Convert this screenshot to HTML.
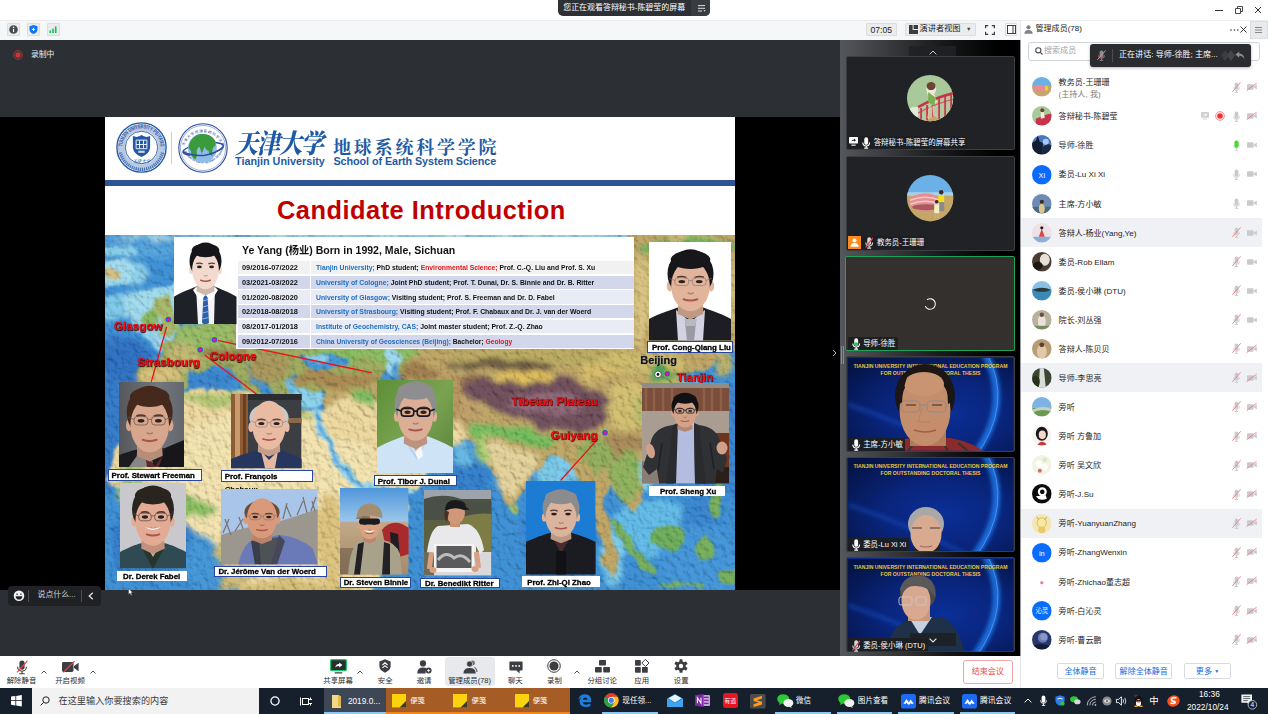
<!DOCTYPE html>
<html lang="zh">
<head>
<meta charset="utf-8">
<title>腾讯会议</title>
<style>
*{box-sizing:border-box;margin:0;padding:0}
html,body{width:1268px;height:714px;overflow:hidden;background:#fff}
body{position:relative;font-family:"Liberation Sans","Noto Sans CJK SC",sans-serif;font-size:9px;color:#222;-webkit-font-smoothing:antialiased}
.abs{position:absolute}
.t{position:absolute;white-space:nowrap;line-height:1}
svg{position:absolute;overflow:visible}
/* top */
#titlebar{left:0;top:0;width:1268px;height:20px;background:#fff}
#toolbar{left:0;top:20px;width:1268px;height:20px;background:#f6f7f8;border-top:1px solid #ececee}
#pill{left:558px;top:0;width:152px;height:15.7px;background:#2d3034;border-radius:0 0 5px 5px;color:#fff;font-size:8px}
.tb-btn{position:absolute;top:22px;height:15px;background:#ebecee;border:1px solid #dcdde0;border-radius:1px}
/* main stage */
#stage{left:0;top:40px;width:840px;height:616px;background:#2c2f33}
#blackL{left:0;top:117px;width:105px;height:473px;background:#000}
#blackR{left:735px;top:117px;width:105px;height:473px;background:#000}
#slide{left:105px;top:117px;width:630px;height:473px;background:#fff;overflow:hidden}
/* video column */
#vcol{left:840px;top:40px;width:180px;height:616px;background:#1a1b1d}
.tile{position:absolute;left:847px;width:168px;height:94px;border-radius:2px;overflow:hidden}
.tile .lab{position:absolute;left:0;bottom:0;height:11px;background:rgba(25,27,30,.85);color:#fff;font-size:8px;line-height:11px;padding:0 4px 0 20px;white-space:nowrap;border-radius:0 2px 0 0}
/* members panel */
#panel{left:1020px;top:40px;width:248px;height:616px;background:#fff}
.row{position:absolute;left:1022px;width:246px;height:29px}
.row.hl{background:#f0f1f5}
.row .nm{position:absolute;left:37px;top:9px;font-size:8.5px;line-height:10px;color:#1a1a1a;white-space:nowrap}
.av{position:absolute;left:10px;top:5px;width:19px;height:19px;border-radius:50%;overflow:hidden}
/* bottom */
#bbar{left:0;top:656px;width:1268px;height:32px;background:#fff}
#task{left:0;top:687.6px;width:1268px;height:26.4px;background:#161f2c}
</style>
</head>
<body>
<!-- ======= top bars ======= -->
<div id="titlebar" class="abs"></div>
<div id="toolbar" class="abs"></div>
<div id="pill" class="abs"><span class="t" id="pilltxt" style="left:5.2px;top:4.2px;font-size:7.96px">您正在观看答辩秘书-陈碧莹的屏幕</span><div class="abs" style="left:133.3px;top:0;width:18.7px;height:15.7px;background:#393c40;border-radius:0 0 5px 0"></div><svg style="left:139.5px;top:4.5px" width="8" height="7" viewBox="0 0 8 7" fill="none" stroke="#f2f2f2" stroke-width=".9"><path d="M0,.6h7M0,3.3h7M0,6h4"/><path d="M5.4,5.2 L6.6,6.6 L7.8,5.2Z" fill="#f2f2f2" stroke="none"/></svg></div>
<!--TOPBARX-->
<!-- window controls -->
<svg style="left:1214px;top:4px" width="50" height="12" viewBox="0 0 50 12" fill="none" stroke="#333" stroke-width="1"><path d="M1,6.5h8"/><path d="M21.5,4.5h5v5h-5z M23.5,4.5v-2h5v5h-2" stroke-width=".9"/><path d="M41,3l6,6M47,3l-6,6"/></svg>
<!-- left toolbar icons -->
<div class="tb-btn" style="left:7px;width:13px;height:13px;top:23px"></div>
<div class="tb-btn" style="left:27px;width:13px;height:13px;top:23px"></div>
<div class="tb-btn" style="left:47px;width:13px;height:13px;top:23px"></div>
<svg style="left:7px;top:23px" width="54" height="13" viewBox="0 0 54 13"><circle cx="6.5" cy="6.5" r="4.3" fill="#4a4d52"/><rect x="6" y="5.8" width="1.1" height="3.2" fill="#fff"/><circle cx="6.55" cy="4.3" r=".7" fill="#fff"/>
<path d="M26.5,2 L30.5,3.3 V6.8 Q30.3,9.6 26.5,11 Q22.7,9.6 22.5,6.8 V3.3Z" fill="#1473f0"/><path d="M26.5,4.8v3.2M24.9,6.4h3.2" stroke="#fff" stroke-width="1"/>
<rect x="42.5" y="7.4" width="1.6" height="2.6" fill="#13c05c"/><rect x="45.2" y="5.6" width="1.6" height="4.4" fill="#13c05c"/><rect x="47.9" y="3.4" width="1.6" height="6.6" fill="#13c05c"/></svg>
<!-- timer & view -->
<div class="tb-btn" style="left:866px;width:31px;top:23px;height:13px"></div>
<div class="t" style="left:870.5px;top:25.5px;font-size:8.6px;color:#222">07:05</div>
<div class="tb-btn" style="left:904.5px;width:71px;top:23px;height:13px"></div>
<svg style="left:909px;top:25px" width="9" height="9" viewBox="0 0 9 9"><path d="M0,0h3.6v5h5.4v4h-9z" fill="#3a3d42"/><rect x="4.6" y="0" width="4.4" height="4" fill="#3a3d42"/></svg>
<div class="t" style="left:919.5px;top:25.3px;font-size:8.2px;color:#222" id="spk">演讲者视图</div>
<div class="t" style="left:966px;top:27px;font-size:5.5px;color:#444">▼</div>
<svg style="left:985px;top:24.5px" width="10" height="10" viewBox="0 0 10 10" fill="none" stroke="#3a3d42" stroke-width="1.2"><path d="M.6,3.2V.6h2.6M6.8,.6h2.6v2.6M9.4,6.8v2.6H6.8M3.2,9.4H.6V6.8"/></svg>
<div class="tb-btn" style="left:1004.5px;width:12.5px;top:23px;height:13px;background:#fff"></div>
<svg style="left:1006.5px;top:25px" width="9" height="9" viewBox="0 0 9 9" fill="none" stroke="#3a3d42" stroke-width="1"><rect x=".5" y=".5" width="8" height="8"/><path d="M6,.5v8"/></svg>
<!-- panel header -->
<div class="abs" style="left:1020px;top:21px;width:248px;height:19px;background:#fff;border-left:1px solid #e4e5e8"></div>
<svg style="left:1024px;top:24.5px" width="9" height="9" viewBox="0 0 9 9" fill="#808388"><circle cx="4.5" cy="2.3" r="2.1"/><path d="M.3,8.8 Q.5,5 4.5,5 Q8.5,5 8.7,8.8Z"/></svg>
<div class="t" style="left:1035.5px;top:25.2px;font-size:8.05px;color:#222" id="mgr">管理成员(78)</div>
<svg style="left:1229.5px;top:28.5px" width="9" height="2" viewBox="0 0 9 2" fill="#333"><circle cx="1" cy="1" r=".8"/><circle cx="4.4" cy="1" r=".8"/><circle cx="7.8" cy="1" r=".8"/></svg>
<svg style="left:1240px;top:26px" width="7" height="7" viewBox="0 0 7 7" stroke="#333" stroke-width="1"><path d="M.5,.5l6,6M6.5,.5l-6,6"/></svg>
<div class="abs" style="left:1250px;top:21px;width:18px;height:18px;background:#e9eaec;border:1px solid #dcdde0"></div>
<svg style="left:1255px;top:27px" width="7" height="6" viewBox="0 0 7 6" stroke="#85888d" stroke-width="1"><path d="M0,.5h7M0,3h7M0,5.5h7"/></svg>
<!--/TOPBARX-->
<!--TOPBAR-->

<!-- ======= stage ======= -->
<div id="stage" class="abs"></div>
<div id="blackL" class="abs"></div>
<div id="blackR" class="abs"></div>
<div id="slide" class="abs">
<!-- header (coords relative to slide: x-105, y-117) -->
<svg style="left:10.5px;top:5px" width="51" height="51" viewBox="-25.5 -25.5 51 51">
  <defs><path id="lp1" d="M-19.2,0 A19.2,19.2 0 1 1 19.2,0"/><path id="lp1b" d="M-13.5,4 A14,14 0 0 0 13.5,4"/></defs>
  <circle r="24.6" fill="#fff" stroke="#2458a6" stroke-width="1.4"/>
  <circle r="22.9" fill="none" stroke="#2458a6" stroke-width=".5"/>
  <circle r="19.6" fill="none" stroke="#2458a6" stroke-width="5.6" opacity=".32"/>
  <circle r="16.2" fill="none" stroke="#2458a6" stroke-width=".9"/>
  <text font-family="Liberation Sans,sans-serif" font-weight="bold" font-size="5.6" fill="#2458a6" textLength="58" lengthAdjust="spacingAndGlyphs"><textPath href="#lp1" startOffset="1">TIANJIN UNIVERSITY·PEIYANG</textPath></text>
  <path d="M-8.6,-11.4 Q-4,-9.4 0,-12.4 Q4,-9.4 8.6,-11.4 L8.6,0.5 Q7.6,6.6 0,9.6 Q-7.6,6.6 -8.6,0.5 Z" fill="#2458a6"/>
  <path d="M-5.4,-7.4 H5.4 V1.2 H-5.4Z M-2,-7.4 V1.2 M2,-7.4 V1.2 M-5.4,-3 H5.4" fill="none" stroke="#e4ecf7" stroke-width="1"/>
  <rect x="-3.2" y="3.2" width="6.4" height="2.2" fill="#e4ecf7" opacity=".85"/>
  <text font-family="Liberation Serif,Noto Serif CJK SC,serif" font-weight="bold" font-size="4.4" fill="#2458a6" text-anchor="middle" x="0" y="15.4" font-style="italic">天津大学</text>
  <path d="M-21,5 A21.5,21.5 0 0 0 21,5" fill="none" stroke="#2458a6" stroke-width="3.2" stroke-dasharray="1.2 .9" opacity=".75"/>
</svg>
<div class="abs" style="left:66px;top:15px;width:1px;height:32px;background:#cfcfcf"></div>
<svg style="left:72.5px;top:6px" width="50" height="50" viewBox="-25 -25 50 50">
  <defs><path id="lp2" d="M-19.6,2 A19.7,19.7 0 0 1 19.6,2"/><path id="lp2b" d="M-21,-3 A21.2,21.2 0 0 0 21,-3"/></defs>
  <circle r="24.2" fill="#fff" stroke="#2b4f9e" stroke-width="1.1"/>
  <circle r="22.6" fill="none" stroke="#2b4f9e" stroke-width=".45"/>
  <text font-family="Liberation Sans,Noto Sans CJK SC,sans-serif" font-size="3.6" fill="#2b4f9e" textLength="50" lengthAdjust="spacing"><textPath href="#lp2" startOffset="4">天津大学地球系统科学学院</textPath></text>
  <text font-family="Liberation Sans,sans-serif" font-weight="bold" font-size="3.1" fill="#2b4f9e" textLength="50" lengthAdjust="spacing"><textPath href="#lp2b" startOffset="7">School of Earth System Science</textPath></text>
  <ellipse cx="0" cy="1" rx="20.4" ry="5.6" fill="none" stroke="#2b4f9e" stroke-width="1.5" transform="rotate(-9)"/>
  <circle r="14.4" cx="-0.6" cy="0.2" fill="#8fbce8"/>
  <path d="M-13.6,-4.5 Q-10,-13.4 -1.5,-14 Q8,-14.6 12.4,-7 Q13.6,-2 10,-0.5 Q8.6,3.4 9.4,8 Q6,7 5.4,2.6 Q3,2.8 1.6,-1.4 Q0.4,3.4 -1.6,5.6 Q-2.4,1 -3.6,-1.2 Q-6,0 -6.4,4 Q-5,9 -8,11.4 Q-12,8.4 -12,3 Q-15.4,0 -13.6,-4.5Z" fill="#3b9a3c"/>
  <path d="M-20,3.6 Q-10,8.6 2,7.2 Q14,5.4 20.2,-1.2" fill="none" stroke="#2b4f9e" stroke-width="1.5"/>
</svg>
<div class="t" style="left:130px;top:13.5px;font-family:'Liberation Serif','Noto Serif CJK SC',serif;font-weight:900;font-style:italic;font-size:23px;letter-spacing:-1px;color:#1e5aa6;transform-origin:0 0;transform:scaleY(1.16)" id="tju">天津大学</div>
<div class="t" style="left:130px;top:39px;font-weight:bold;font-size:10.8px;color:#1e5aa6;letter-spacing:0px" id="tjuen">Tianjin University</div>
<div class="t" style="left:228px;top:21.6px;font-family:'Liberation Serif','Noto Serif CJK SC',serif;font-weight:700;font-size:18px;letter-spacing:2.8px;color:#1e5aa6" id="sess">地球系统科学学院</div>
<div class="t" style="left:228.5px;top:39px;font-weight:bold;font-size:10.8px;color:#1e5aa6;letter-spacing:-0.08px" id="sessen">School of Earth System Science</div>
<div class="abs" style="left:0;top:63px;width:630px;height:5.5px;background:#2f5496"></div>
<div class="t" style="left:172px;top:80.8px;font-weight:bold;font-size:25.4px;letter-spacing:0.5px;color:#c00000" id="cand">Candidate Introduction</div>
<!--MAP-->
<svg style="left:0;top:118px" width="630" height="355" viewBox="0 0 630 355">
<defs>
<filter id="mb" x="-5%" y="-5%" width="110%" height="110%"><feTurbulence type="fractalNoise" baseFrequency="0.05" numOctaves="3" seed="7" result="n"/><feDisplacementMap in="SourceGraphic" in2="n" scale="14" xChannelSelector="R" yChannelSelector="G" result="d"/><feGaussianBlur in="d" stdDeviation="1.1"/></filter>
<filter id="mb2" x="-10%" y="-10%" width="120%" height="120%"><feTurbulence type="fractalNoise" baseFrequency="0.04" numOctaves="3" seed="21" result="n"/><feDisplacementMap in="SourceGraphic" in2="n" scale="18" xChannelSelector="G" yChannelSelector="R" result="d"/><feGaussianBlur in="d" stdDeviation="2.6"/></filter>
<filter id="relief" x="0" y="0" width="100%" height="100%"><feTurbulence type="fractalNoise" baseFrequency="0.16" numOctaves="5" seed="5" result="t"/><feDiffuseLighting in="t" lighting-color="#ffffff" surfaceScale="2.6" diffuseConstant="1.15"><feDistantLight azimuth="315" elevation="52"/></feDiffuseLighting></filter>
<clipPath id="mc"><rect width="630" height="355"/></clipPath>
</defs>
<g clip-path="url(#mc)">
<rect width="630" height="355" fill="#2784d2"/>
<g filter="url(#mb2)">
<ellipse cx="15" cy="37" rx="26" ry="13" fill="#7fcbe8" />
<ellipse cx="45" cy="70" rx="34" ry="16" fill="#8dd2ea" />
<ellipse cx="7" cy="73" rx="12" ry="10" fill="#6ec0e6" />
<ellipse cx="35" cy="15" rx="40" ry="8" fill="#3f9ada" />
<ellipse cx="20" cy="120" rx="28" ry="18" fill="#1c68c2" />
<ellipse cx="5" cy="195" rx="14" ry="60" fill="#1d6cc4" />
<ellipse cx="45" cy="305" rx="40" ry="40" fill="#1f70c6" />
<ellipse cx="100" cy="325" rx="22" ry="30" fill="#2f8ad4" />
<ellipse cx="105" cy="145" rx="26" ry="10" fill="#2378ca" />
<ellipse cx="210" cy="167" rx="36" ry="9" fill="#2a80ce" />
<ellipse cx="185" cy="153" rx="10" ry="12" fill="#5fb8e4" />
<ellipse cx="221" cy="125" rx="28" ry="8" fill="#2a82d0" />
<ellipse cx="297" cy="127" rx="12" ry="12" fill="#8fd4e8" />
<ellipse cx="320" cy="119" rx="8" ry="5" fill="#8fd4e8" />
<ellipse cx="360" cy="265" rx="26" ry="50" fill="#1f72c8" />
<ellipse cx="357" cy="217" rx="10" ry="14" fill="#52b0e2" />
<ellipse cx="455" cy="295" rx="36" ry="55" fill="#2378cc" />
<ellipse cx="455" cy="235" rx="28" ry="16" fill="#6cc4e8" />
<ellipse cx="535" cy="235" rx="18" ry="16" fill="#7accec" />
<ellipse cx="550" cy="293" rx="42" ry="30" fill="#4fb4e6" />
<ellipse cx="595" cy="285" rx="20" ry="26" fill="#2378cc" />
<ellipse cx="507" cy="325" rx="12" ry="26" fill="#6cc4ea" />
<ellipse cx="595" cy="325" rx="40" ry="36" fill="#2f8ad6" />
<ellipse cx="623" cy="205" rx="14" ry="60" fill="#2378cc" />
<ellipse cx="585" cy="145" rx="14" ry="5" fill="#8ad2ec" />
<ellipse cx="315" cy="2" rx="320" ry="4" fill="#a8dce6" />
</g>
<g filter="url(#mb)" opacity=".9">
<polygon points="23,59 45,53 71,49 73,65 71,105 55,117 45,105 31,99 25,79" fill="#98d9ee" />
<polygon points="0,27 23,23 31,37 19,49 0,51" fill="#9adaee" />
<polygon points="0,61 17,59 21,75 5,83 0,81" fill="#6fc4ea" />
<ellipse cx="20" cy="127" rx="24" ry="20" fill="#1560bc" />
<ellipse cx="13" cy="15" rx="20" ry="6" fill="#7fcdea" />
</g>
<g filter="url(#mb)">
<polygon points="47,63 65,60 69,77 71,98 53,101 57,85 47,77" fill="#9fb05a" />
<ellipse cx="45" cy="84" rx="7" ry="8" fill="#7db050" />
<ellipse cx="8" cy="37" rx="9" ry="5" fill="#cdb878" />
<polygon points="85,90 135,87 315,87 315,117 335,115 347,127 347,145 325,149 300,141 280,133 273,151 273,159 235,157 195,155 191,137 179,145 187,163 177,167 165,153 153,137 143,127 147,145 157,161 149,163 135,149 123,133 109,131 95,137 83,137 81,153 55,155 33,151 31,131 55,127 59,113 55,107 73,103" fill="#93a24e" />
<polygon points="45,173 81,157 135,153 157,165 195,177 225,175 247,167 273,159 335,149 365,157 373,179 357,201 341,217 327,235 315,249 295,259 303,275 291,305 275,335 265,360 137,360 128,330 118,305 101,285 81,274 55,272 19,265 5,243 7,217 23,193" fill="#ecd596" />
<polygon points="315,110 355,105 523,105 523,-5 635,-5 635,110 621,117 611,129 599,135 585,137 571,143 577,153 595,157 607,169 607,189 595,207 579,217 559,221 543,227 529,223 525,235 535,251 539,267 529,277 517,265 507,251 499,263 505,285 509,310 513,335 507,345 499,325 493,295 485,265 473,239 461,225 445,223 431,235 419,255 407,271 399,265 389,241 379,217 369,205 353,205 335,205 315,195 303,185 295,173 265,163 240,167 223,177 217,163 225,153 255,149 295,149" fill="#b89c54" />
</g>
<g filter="url(#mb2)">
<ellipse cx="100" cy="101" rx="30" ry="12" fill="#8db455" />
<ellipse cx="80" cy="120" rx="20" ry="14" fill="#b9b062" />
<ellipse cx="55" cy="141" rx="22" ry="9" fill="#d6b96c" />
<ellipse cx="119" cy="117" rx="24" ry="6" fill="#8e6c38" />
<ellipse cx="165" cy="133" rx="22" ry="14" fill="#a08c48" />
<ellipse cx="255" cy="119" rx="60" ry="7" fill="#7db650" />
<ellipse cx="231" cy="145" rx="42" ry="9" fill="#a07c3c" />
<ellipse cx="315" cy="137" rx="24" ry="10" fill="#94703a" />
<ellipse cx="165" cy="245" rx="110" ry="72" fill="#f2e0a6" />
<ellipse cx="109" cy="163" rx="34" ry="7" fill="#a9bf62" />
<ellipse cx="185" cy="180" rx="26" ry="5" fill="#bcc870" />
<ellipse cx="45" cy="235" rx="30" ry="40" fill="#ecd596" />
<ellipse cx="25" cy="245" rx="10" ry="26" fill="#9cc45c" />
<ellipse cx="85" cy="273" rx="30" ry="10" fill="#7db850" />
<ellipse cx="130" cy="325" rx="18" ry="30" fill="#c8b468" />
<ellipse cx="195" cy="355" rx="60" ry="10" fill="#d0b866" />
<ellipse cx="225" cy="305" rx="14" ry="50" fill="#d9bd70" />
<ellipse cx="335" cy="190" rx="34" ry="26" fill="#ecd494" />
<ellipse cx="435" cy="123" rx="90" ry="9" fill="#b4a250" />
<ellipse cx="395" cy="131" rx="55" ry="6" fill="#5e4a2e" />
<ellipse cx="365" cy="149" rx="12" ry="10" fill="#7a5a3a" />
<ellipse cx="420" cy="143" rx="30" ry="7" fill="#dcb84a" />
<ellipse cx="495" cy="137" rx="24" ry="8" fill="#d2b458" />
<ellipse cx="345" cy="163" rx="22" ry="20" fill="#b08a4c" />
<ellipse cx="261" cy="167" rx="10" ry="14" fill="#6db44c" transform="rotate(-30 261 167)" />
<ellipse cx="245" cy="185" rx="30" ry="22" fill="#ecd594" />
<ellipse cx="365" cy="175" rx="10" ry="22" fill="#b89458" />
<polygon points="357,147 379,143 415,149 455,145 493,153 505,169 499,189 475,197 440,193 407,181 381,169 365,163" fill="#5e3a48" />
<ellipse cx="443" cy="169" rx="40" ry="10" fill="#84596a" />
<polygon points="365,189 415,191 455,203 440,211 395,203 367,201" fill="#62b648" />
<polygon points="371,205 415,209 435,221 423,243 407,269 393,251 381,225" fill="#e2cd90" />
<ellipse cx="379" cy="215" rx="6" ry="16" fill="#9cc660" />
<ellipse cx="535" cy="127" rx="46" ry="10" fill="#c8b45c" />
<ellipse cx="523" cy="170" rx="24" ry="26" fill="#cdb860" />
<ellipse cx="555" cy="137" rx="12" ry="8" fill="#2f9a48" />
<ellipse cx="563" cy="175" rx="30" ry="30" fill="#a8b456" />
<ellipse cx="517" cy="211" rx="24" ry="12" fill="#a07e44" />
<ellipse cx="493" cy="221" rx="18" ry="16" fill="#86a44a" />
<ellipse cx="521" cy="243" rx="14" ry="24" fill="#84aa4c" />
<ellipse cx="585" cy="55" rx="50" ry="60" fill="#c9b468" />
<ellipse cx="585" cy="11" rx="50" ry="8" fill="#5fa848" />
<ellipse cx="537" cy="65" rx="8" ry="50" fill="#d4bc72" />
<ellipse cx="617" cy="125" rx="10" ry="14" fill="#b0a85a" />
</g>
<g filter="url(#mb)">
<polyline points="208,176 220,203 235,229 252,251 275,259 303,254" fill="none" stroke="#8ad0ea" stroke-width="7.5" stroke-linecap="round" stroke-linejoin="round"/>
<polyline points="209,179 221,205 236,231 252,250" fill="none" stroke="#3f9cdc" stroke-width="3" stroke-linecap="round" stroke-linejoin="round"/>
<ellipse cx="217" cy="126" rx="25" ry="7.5" fill="#2f8ad4" />
<ellipse cx="211" cy="122" rx="12" ry="3" fill="#7cc8e8" />
<ellipse cx="287" cy="126" rx="9" ry="13" fill="#8fd4ea" />
<ellipse cx="289" cy="133" rx="5" ry="6" fill="#3a96d8" />
<ellipse cx="205" cy="163" rx="14" ry="9" fill="#7fcdea" />
<ellipse cx="293" cy="179" rx="16" ry="5" fill="#55acdf" transform="rotate(35 293 179)" />
<ellipse cx="563" cy="301" rx="17" ry="13" fill="#5da548" />
<polyline points="509,287 527,313 547,337" fill="none" stroke="#68a648" stroke-width="7" stroke-linecap="round" stroke-linejoin="round"/>
<ellipse cx="611" cy="265" rx="6" ry="18" fill="#68a648" />
<ellipse cx="601" cy="313" rx="7" ry="13" fill="#68a648" />
<polyline points="555,349 595,353" fill="none" stroke="#68a648" stroke-width="4" stroke-linecap="round" stroke-linejoin="round"/>
<ellipse cx="625" cy="341" rx="12" ry="8" fill="#68a648" />
<ellipse cx="407" cy="274" rx="3.5" ry="6" fill="#9cb858" />
<ellipse cx="531" cy="229" rx="4" ry="3" fill="#68a648" />
</g>
<rect width="630" height="355" filter="url(#relief)" style="mix-blend-mode:multiply" opacity=".5"/>
<rect width="630" height="355" filter="url(#relief)" style="mix-blend-mode:screen" opacity=".12"/>
</g></svg>
<!--/MAP-->
<!--MAPLABELS-->
<svg style="left:0;top:0" width="630" height="473" viewBox="0 0 630 473"><g stroke="#e8141a" stroke-width="1.3" stroke-linecap="round"><line x1="61.5" y1="210.4" x2="46.4" y2="264.4"/><line x1="113.6" y1="223.7" x2="266.0" y2="255.6"/><line x1="100.3" y1="238.5" x2="151.4" y2="277.0"/><line x1="492.5" y1="322.4" x2="456.0" y2="363.0"/></g>
<circle cx="63.4" cy="202.5" r="3.6" fill="#7ad02c"/><circle cx="63.4" cy="202.5" r="2.8" fill="#3a4ee8"/><circle cx="63.4" cy="202.5" r="1.7" fill="#f01090"/>
<circle cx="95.2" cy="232.8" r="3.6" fill="#7ad02c"/><circle cx="95.2" cy="232.8" r="2.8" fill="#3a4ee8"/><circle cx="95.2" cy="232.8" r="1.7" fill="#f01090"/>
<circle cx="109.4" cy="222.7" r="3.6" fill="#7ad02c"/><circle cx="109.4" cy="222.7" r="2.8" fill="#3a4ee8"/><circle cx="109.4" cy="222.7" r="1.7" fill="#f01090"/>
<circle cx="500.0" cy="315.7" r="3.6" fill="#7ad02c"/><circle cx="500.0" cy="315.7" r="2.8" fill="#3a4ee8"/><circle cx="500.0" cy="315.7" r="1.7" fill="#f01090"/>
<circle cx="562.2" cy="256.8" r="3.6" fill="#7ad02c"/><circle cx="562.2" cy="256.8" r="2.8" fill="#3a4ee8"/><circle cx="562.2" cy="256.8" r="1.7" fill="#f01090"/>
<circle cx="553" cy="257.4" r="3.3" fill="#fff" stroke="#222" stroke-width=".6"/><circle cx="553" cy="257.4" r="1.4" fill="#111"/>
</svg>
<div class="t" id="m1" style="left:9.0px;top:201.7px;line-height:normal;font-weight:bold;font-size:11.7px;color:#f01018;text-shadow:0 0 1px #500,0.5px 0.5px 1px #400">Glasgow</div>
<div class="t" id="m2" style="left:32.6px;top:238.3px;line-height:normal;font-weight:bold;font-size:11.7px;color:#f01018;text-shadow:0 0 1px #500,0.5px 0.5px 1px #400">Strasbourg</div>
<div class="t" id="m3" style="left:104.7px;top:231.6px;line-height:normal;font-weight:bold;font-size:11.7px;color:#f01018;text-shadow:0 0 1px #500,0.5px 0.5px 1px #400">Cologne</div>
<div class="t" id="m4" style="left:406.6px;top:277.3px;line-height:normal;font-weight:bold;font-size:11.7px;color:#f01018;text-shadow:0 0 1px #500,0.5px 0.5px 1px #400">Tibetan Plateau</div>
<div class="t" id="m5" style="left:445.8px;top:310.8px;line-height:normal;font-weight:bold;font-size:11.7px;color:#f01018;text-shadow:0 0 1px #500,0.5px 0.5px 1px #400">Guiyang</div>
<div class="t" id="m6" style="left:571.7px;top:254.2px;line-height:normal;font-weight:bold;font-size:11.4px;color:#f01018;text-shadow:0 0 1px #500,0.5px 0.5px 1px #400">Tianjin</div>
<div class="t" id="m7" style="left:535.2px;top:237.3px;line-height:normal;font-weight:bold;font-size:11px;color:#151515;text-shadow:0 0 2px #fff8,0 0 1px #000">Beijing</div>
<div class="t" style="left:119.69999999999999px;top:369px;font-weight:bold;font-size:7.85px;color:#000">Chabaux</div>
<!--/MAPLABELS-->
<!--TABLE-->
<div class="abs" style="left:131px;top:120.3px;width:398px;height:112.1px;background:#fff"></div>
<div class="t" id="yy" style="left:137px;top:128.2px;font-weight:bold;font-size:10.8px;color:#111;transform-origin:0 0;transform:scaleX(0.977)">Ye Yang (<span style="font-size:10.5px">杨业</span>) Born in 1992, Male, Sichuan</div>
<div class="abs" style="left:132.5px;top:143.5px;width:72.4px;height:13.4px;background:#f1f1f2"></div>
<div class="abs" style="left:206.39999999999998px;top:143.5px;width:322.6px;height:13.4px;background:#f1f1f2"></div>
<div class="t tr" id="d0" style="left:137px;top:146.8px;font-weight:bold;font-size:7.4px;color:#111">09/2016-07/2022</div>
<div class="t tr" id="r0" style="left:210.7px;top:146.8px;font-weight:bold;font-size:7.4px;white-space:pre;transform-origin:0 0;transform:scaleX(0.918)"><span style="color:#1c6fc2">Tianjin University;</span><span style="color:#111"> PhD student; </span><span style="color:#e3141c">Environmental Science;</span><span style="color:#111"> Prof. C.-Q. Liu and Prof. S. Xu</span></div>
<div class="abs" style="left:132.5px;top:158.5px;width:72.4px;height:13.4px;background:#d3d7eb"></div>
<div class="abs" style="left:206.39999999999998px;top:158.5px;width:322.6px;height:13.4px;background:#d3d7eb"></div>
<div class="t tr" id="d1" style="left:137px;top:161.8px;font-weight:bold;font-size:7.4px;color:#111">03/2021-03/2022</div>
<div class="t tr" id="r1" style="left:210.7px;top:161.8px;font-weight:bold;font-size:7.4px;white-space:pre;transform-origin:0 0;transform:scaleX(0.923)"><span style="color:#1c6fc2">University of Cologne;</span><span style="color:#111"> Joint PhD student; Prof. T. Dunai, Dr. S. Binnie and Dr. B. Ritter</span></div>
<div class="abs" style="left:132.5px;top:173.3px;width:72.4px;height:13.4px;background:#e9ebf5"></div>
<div class="abs" style="left:206.39999999999998px;top:173.3px;width:322.6px;height:13.4px;background:#e9ebf5"></div>
<div class="t tr" id="d2" style="left:137px;top:176.6px;font-weight:bold;font-size:7.4px;color:#111">01/2020-08/2020</div>
<div class="t tr" id="r2" style="left:210.7px;top:176.6px;font-weight:bold;font-size:7.4px;white-space:pre;transform-origin:0 0;transform:scaleX(0.923)"><span style="color:#1c6fc2">University of Glasgow;</span><span style="color:#111"> Visiting student; Prof. S. Freeman and Dr. D. Fabel</span></div>
<div class="abs" style="left:132.5px;top:188.1px;width:72.4px;height:13.4px;background:#d3d7eb"></div>
<div class="abs" style="left:206.39999999999998px;top:188.1px;width:322.6px;height:13.4px;background:#d3d7eb"></div>
<div class="t tr" id="d3" style="left:137px;top:191.4px;font-weight:bold;font-size:7.4px;color:#111">02/2018-08/2018</div>
<div class="t tr" id="r3" style="left:210.7px;top:191.4px;font-weight:bold;font-size:7.4px;white-space:pre;transform-origin:0 0;transform:scaleX(0.926)"><span style="color:#1c6fc2">University of Strasbourg;</span><span style="color:#111"> Visiting student; Prof. F. Chabaux and Dr. J. van der Woerd</span></div>
<div class="abs" style="left:132.5px;top:202.9px;width:72.4px;height:13.4px;background:#e9ebf5"></div>
<div class="abs" style="left:206.39999999999998px;top:202.9px;width:322.6px;height:13.4px;background:#e9ebf5"></div>
<div class="t tr" id="d4" style="left:137px;top:206.2px;font-weight:bold;font-size:7.4px;color:#111">08/2017-01/2018</div>
<div class="t tr" id="r4" style="left:210.7px;top:206.2px;font-weight:bold;font-size:7.4px;white-space:pre;transform-origin:0 0;transform:scaleX(0.924)"><span style="color:#1c6fc2">Institute of Geochemistry, CAS;</span><span style="color:#111"> Joint master student; Prof. Z.-Q. Zhao</span></div>
<div class="abs" style="left:132.5px;top:217.8px;width:72.4px;height:13.4px;background:#d3d7eb"></div>
<div class="abs" style="left:206.39999999999998px;top:217.8px;width:322.6px;height:13.4px;background:#d3d7eb"></div>
<div class="t tr" id="d5" style="left:137px;top:221.1px;font-weight:bold;font-size:7.4px;color:#111">09/2012-07/2016</div>
<div class="t tr" id="r5" style="left:210.7px;top:221.1px;font-weight:bold;font-size:7.4px;white-space:pre;transform-origin:0 0;transform:scaleX(0.905)"><span style="color:#1c6fc2">China University of Geosciences (Beijing);</span><span style="color:#111"> Bachelor; </span><span style="color:#e3141c">Geology</span></div>
<!--/TABLE-->
<!--PHOTOS-->
<svg style="left:69.0px;top:120.3px" width="62.5" height="87.0" viewBox="0 0 62.5 87.0"><clipPath id="cp1"><rect width="62.5" height="87.0"/></clipPath><g clip-path="url(#cp1)"><rect width="62.5" height="87" fill="#fff"/><path d="M23.5,49.0 C17.1,52.0 8.1,54.4 -2,61.0 L-2,89 L64.5,89 L64.5,61.0 C54.6,54.4 45.9,52.0 39.5,49.0 Z" fill="#1f2128"/><path d="M22,50 L31.5,58 L41,50 L40,87 L24,87Z" fill="#f4f4f6"/><path d="M29.5,58 L33.5,58 L35,86 L31.5,88 L28,86Z" fill="#2d5ea8"/><path d="M29,64 l5,-1.5 M28.8,70 l5.5,-1.5 M28.5,76 l6,-1.5 M28.3,82 l6.4,-1.5" stroke="#8ab4e8" stroke-width="1"/><path d="M22,50 L31.5,58 L26,64 L19,53Z M41,50 L31.5,58 L37,64 L44,53Z" fill="#ffffff"/><path d="M23.2,42.3 L22.5,54.3 L31.5,58.4 L40.5,54.3 L39.8,42.3Z" fill="#f2dace"/><path d="M23.2,47.8 Q31.5,56.1 39.8,47.8 L40.5,54.3 L31.5,58.4 L22.5,54.3Z" fill="#00000026"/><ellipse cx="17.1" cy="33.1" rx="2.1" ry="4.1" fill="#f2dace"/><ellipse cx="45.9" cy="33.1" rx="2.1" ry="4.1" fill="#f2dace"/><ellipse cx="31.5" cy="24.0" rx="16.0" ry="18.4" fill="#15151a"/><ellipse cx="31.5" cy="33.1" rx="13.4" ry="18.8" fill="#f2dace"/><ellipse cx="31.5" cy="13.4" rx="13.8" ry="6.9" fill="#15151a"/><path d="M18.1,17.1 L17.7,29.5 L20.6,19.4Z M44.9,17.1 L45.3,29.5 L42.4,19.4Z" fill="#15151a"/><ellipse cx="25.4" cy="29.9" rx="2.4" ry="1.3" fill="#2c201c"/><ellipse cx="37.6" cy="29.9" rx="2.4" ry="1.3" fill="#2c201c"/><path d="M22.2,26.7 Q25.4,25.3 28.6,26.9 M34.4,26.9 Q37.6,25.3 40.8,26.7" stroke="#2a1c18" stroke-width="1.3" fill="none" opacity=".8"/><path d="M29.6,38.2 Q31.5,39.8 33.7,38.2" stroke="#00000040" stroke-width="1.1" fill="none"/><path d="M26.7,43.2 Q31.5,45.1 36.3,43.2" stroke="#a8564c" stroke-width="1.5" fill="none" stroke-linecap="round"/></g></svg>
<svg style="left:544.1px;top:125.0px" width="82.0" height="98.4" viewBox="0 0 82.0 98.4"><clipPath id="cp2"><rect width="82.0" height="98.4"/></clipPath><g clip-path="url(#cp2)"><rect width="82" height="98.4" fill="#fff"/><path d="M30.5,65.0 C21.7,68.2 11.1,70.8 -2,78.0 L-2,100.4 L84,100.4 L84,78.0 C71.2,70.8 61.3,68.2 52.5,65.0 Z" fill="#1c1e24"/><path d="M27,68 L41.5,80 L56,68 L54,99 L29,99Z" fill="#d2d2e2"/><path d="M36,80 L47,80 L45,99 L38,99Z" fill="#9a9aa4"/><path d="M35,77 L48,77 L46,84 L37,84Z" fill="#b8b8c0"/><path d="M29.5,56.1 L28.6,72.0 L41.5,77.4 L54.4,72.0 L53.5,56.1Z" fill="#e2b49c"/><path d="M29.5,63.4 Q41.5,74.4 53.5,63.4 L54.4,72.0 L41.5,77.4 L28.6,72.0Z" fill="#00000026"/><ellipse cx="20.8" cy="43.9" rx="3.0" ry="5.5" fill="#e2b49c"/><ellipse cx="62.2" cy="43.9" rx="3.0" ry="5.5" fill="#e2b49c"/><ellipse cx="41.5" cy="31.7" rx="23.0" ry="24.4" fill="#17171b"/><ellipse cx="41.5" cy="43.9" rx="19.3" ry="25.0" fill="#e2b49c"/><ellipse cx="41.5" cy="17.7" rx="19.8" ry="9.2" fill="#17171b"/><path d="M22.2,22.6 L21.7,39.0 L25.9,25.6Z M60.8,22.6 L61.3,39.0 L57.1,25.6Z" fill="#17171b"/><ellipse cx="32.8" cy="39.6" rx="3.4" ry="1.7" fill="#2c201c"/><ellipse cx="50.2" cy="39.6" rx="3.4" ry="1.7" fill="#2c201c"/><path d="M28.2,35.4 Q32.8,33.5 37.4,35.7 M45.6,35.7 Q50.2,33.5 54.8,35.4" stroke="#2a1c18" stroke-width="1.7" fill="none" opacity=".8"/><path d="M38.7,50.6 Q41.5,52.7 44.7,50.6" stroke="#00000040" stroke-width="1.5" fill="none"/><path d="M34.6,57.3 Q41.5,59.8 48.4,57.3" stroke="#a8564c" stroke-width="2.0" fill="none" stroke-linecap="round"/><g fill="none" stroke="#8a7a70" stroke-width="0.7"><rect x="25.9" y="35.7" width="13.8" height="7.9" rx="3.2"/><rect x="43.3" y="35.7" width="13.8" height="7.9" rx="3.2"/><path d="M39.7,38.4 L43.3,38.4 M25.9,38.4 L20.3,36.5 M57.1,38.4 L62.7,36.5"/></g></g></svg>
<svg style="left:13.5px;top:264.8px" width="65.0" height="85.0" viewBox="0 0 65.0 85.0"><clipPath id="cp3"><rect width="65.0" height="85.0"/></clipPath><g clip-path="url(#cp3)"><defs><linearGradient id="g3" x1="0" x2="1"><stop offset="0" stop-color="#55575c"/><stop offset=".6" stop-color="#73767c"/><stop offset="1" stop-color="#64676d"/></linearGradient></defs><rect width="65" height="85" fill="url(#g3)"/><path d="M24.0,66.0 C16.0,68.0 8.8,69.6 -2,74.0 L-2,87 L67,87 L67,74.0 C57.1,69.6 52.0,68.0 44.0,66.0 Z" fill="#1b1b20"/><path d="M10,85 L22,68 L34,80 L30,85Z" fill="#8a8684"/><path d="M26,72 L36,84 L46,70 L40,85 L28,85Z" fill="#5a2a28"/><path d="M46,66 L65,58 L65,85 L40,85Z" fill="#17171b"/><path d="M18.7,56.5 L17.8,73.7 L30.7,79.6 L43.6,73.7 L42.7,56.5Z" fill="#d8a68c"/><path d="M18.7,64.4 Q30.7,76.3 42.7,64.4 L43.6,73.7 L30.7,79.6 L17.8,73.7Z" fill="#00000026"/><ellipse cx="10.0" cy="43.3" rx="3.0" ry="5.9" fill="#d8a68c"/><ellipse cx="51.4" cy="43.3" rx="3.0" ry="5.9" fill="#d8a68c"/><ellipse cx="30.7" cy="30.2" rx="23.0" ry="26.4" fill="#45291c"/><ellipse cx="30.7" cy="43.3" rx="19.3" ry="27.0" fill="#d8a68c"/><ellipse cx="30.7" cy="15.0" rx="19.8" ry="9.9" fill="#45291c"/><path d="M11.4,20.3 L10.9,38.1 L15.1,23.6Z M50.0,20.3 L50.5,38.1 L46.3,23.6Z" fill="#45291c"/><ellipse cx="22.0" cy="38.7" rx="3.4" ry="1.8" fill="#2c201c"/><ellipse cx="39.4" cy="38.7" rx="3.4" ry="1.8" fill="#2c201c"/><path d="M17.4,34.1 Q22.0,32.1 26.6,34.4 M34.8,34.4 Q39.4,32.1 44.0,34.1" stroke="#2a1c18" stroke-width="1.8" fill="none" opacity=".8"/><path d="M27.9,50.6 Q30.7,52.9 33.9,50.6" stroke="#00000040" stroke-width="1.6" fill="none"/><path d="M23.8,57.8 Q30.7,60.5 37.6,57.8" stroke="#a8564c" stroke-width="2.1" fill="none" stroke-linecap="round"/><g fill="none" stroke="#6a5a50" stroke-width="0.8"><rect x="15.1" y="34.4" width="13.8" height="8.6" rx="3.4"/><rect x="32.5" y="34.4" width="13.8" height="8.6" rx="3.4"/><path d="M28.9,37.4 L32.5,37.4 M15.1,37.4 L9.5,35.3 M46.3,37.4 L51.9,35.3"/></g></g></svg>
<svg style="left:126.3px;top:277.3px" width="70.6" height="74.2" viewBox="0 0 70.6 74.2"><clipPath id="cp4"><rect width="70.6" height="74.2"/></clipPath><g clip-path="url(#cp4)"><rect width="70.6" height="74.2" fill="#3b3f44"/><rect width="17" height="74.2" fill="#8d5c36"/><rect x="4" width="5" height="74.2" fill="#c89a6c"/><rect x="12" width="3" height="74.2" fill="#6a4024"/><rect x="17" y="0" width="54" height="6" fill="#2a2c30"/><rect x="55" y="24" width="16" height="5" fill="#8a6848"/><path d="M27.0,56.0 C18.2,58.5 10.0,60.5 -2,66.0 L-2,76.2 L72.6,76.2 L72.6,66.0 C62.2,60.5 57.8,58.5 49.0,56.0 Z" fill="#26365f"/><path d="M30,57 L38,66 L47,57 L44,74 L34,74Z" fill="#e6b8a0"/><path d="M27.6,44.0 L26.8,57.8 L38.0,62.6 L49.2,57.8 L48.4,44.0Z" fill="#e9bba3"/><path d="M27.6,50.3 Q38.0,59.9 48.4,50.3 L49.2,57.8 L38.0,62.6 L26.8,57.8Z" fill="#00000026"/><ellipse cx="20.0" cy="33.3" rx="2.6" ry="4.8" fill="#e9bba3"/><ellipse cx="56.0" cy="33.3" rx="2.6" ry="4.8" fill="#e9bba3"/><ellipse cx="38.0" cy="23.7" rx="19.6" ry="14.4" fill="#c9c9c9"/><ellipse cx="38.0" cy="31.2" rx="16.8" ry="24.5" fill="#e9bba3"/><ellipse cx="30.4" cy="29.6" rx="3.0" ry="1.5" fill="#2c201c"/><ellipse cx="45.6" cy="29.6" rx="3.0" ry="1.5" fill="#2c201c"/><path d="M26.4,25.9 Q30.4,24.3 34.4,26.1 M41.6,26.1 Q45.6,24.3 49.6,25.9" stroke="#2a1c18" stroke-width="1.5" fill="none" opacity=".8"/><path d="M35.6,39.2 Q38.0,41.0 40.8,39.2" stroke="#00000040" stroke-width="1.3" fill="none"/><path d="M32.0,45.0 Q38.0,47.2 44.0,45.0" stroke="#a8564c" stroke-width="1.7" fill="none" stroke-linecap="round"/><g fill="none" stroke="#8a8078" stroke-width="0.6"><rect x="24.4" y="26.1" width="12.0" height="6.9" rx="2.8"/><rect x="39.6" y="26.1" width="12.0" height="6.9" rx="2.8"/><path d="M36.4,28.6 L39.6,28.6 M24.4,28.6 L19.6,26.8 M51.6,28.6 L56.4,26.8"/></g></g></svg>
<svg style="left:272.0px;top:263.0px" width="76.0" height="93.0" viewBox="0 0 76.0 93.0"><clipPath id="cp5"><rect width="76.0" height="93.0"/></clipPath><g clip-path="url(#cp5)"><defs><linearGradient id="g5" x1="0" x2="1" y1="0" y2="1"><stop offset="0" stop-color="#5d8f38"/><stop offset=".5" stop-color="#7aa350"/><stop offset="1" stop-color="#56803a"/></linearGradient></defs><rect width="76" height="93" fill="url(#g5)"/><path d="M27.5,56.0 C18.7,59.2 10.2,61.9 -2,69.0 L-2,95 L78,95 L78,69.0 C66.2,61.9 58.3,59.2 49.5,56.0 Z" fill="#cfe3f6"/><path d="M28,60 L40,76 L50,60 L46,68 L40,80 L32,68Z" fill="#b4cfea"/><path d="M34,62 L40,74 L46,62Z" fill="#d8a890"/><path d="M38,72 L44,66 L46,76 L41,80Z" fill="#f4f6fa"/><path d="M27.6,48.2 L26.7,63.5 L38.5,68.9 L50.3,63.5 L49.4,48.2Z" fill="#dcae96"/><path d="M27.6,55.3 Q38.5,65.9 49.4,55.3 L50.3,63.5 L38.5,68.9 L26.7,63.5Z" fill="#00000026"/><ellipse cx="19.6" cy="36.4" rx="2.7" ry="5.3" fill="#dcae96"/><ellipse cx="57.4" cy="36.4" rx="2.7" ry="5.3" fill="#dcae96"/><ellipse cx="38.5" cy="24.6" rx="21.0" ry="23.6" fill="#8e8e90"/><ellipse cx="38.5" cy="36.4" rx="17.6" ry="24.2" fill="#dcae96"/><ellipse cx="38.5" cy="11.0" rx="18.1" ry="8.8" fill="#8e8e90"/><path d="M20.9,15.8 L20.4,31.7 L24.2,18.7Z M56.1,15.8 L56.6,31.7 L52.8,18.7Z" fill="#8e8e90"/><ellipse cx="30.5" cy="32.3" rx="3.1" ry="1.7" fill="#2c201c"/><ellipse cx="46.5" cy="32.3" rx="3.1" ry="1.7" fill="#2c201c"/><path d="M26.3,28.1 Q30.5,26.4 34.7,28.4 M42.3,28.4 Q46.5,26.4 50.7,28.1" stroke="#2a1c18" stroke-width="1.7" fill="none" opacity=".8"/><path d="M36.0,42.9 Q38.5,45.0 41.4,42.9" stroke="#00000040" stroke-width="1.5" fill="none"/><path d="M32.2,49.4 Q38.5,51.7 44.8,49.4" stroke="#a8564c" stroke-width="1.9" fill="none" stroke-linecap="round"/><g fill="none" stroke="#1a1a1c" stroke-width="1.6"><rect x="24.2" y="28.4" width="12.6" height="7.7" rx="3.1"/><rect x="40.2" y="28.4" width="12.6" height="7.7" rx="3.1"/><path d="M36.8,31.1 L40.2,31.1 M24.2,31.1 L19.2,29.2 M52.8,31.1 L57.8,29.2"/></g></g></svg>
<svg style="left:536.6px;top:265.9px" width="87.0" height="100.6" viewBox="0 0 87.0 100.6"><clipPath id="cp6"><rect width="87.0" height="100.6"/></clipPath><g clip-path="url(#cp6)"><rect width="87" height="100.6" fill="#a99d92"/><rect width="87" height="6" fill="#8e8d8a"/><rect y="5" width="87" height="23" fill="#7a4e3a"/><path d="M4,5v23M12,5v23M21,5v23M30,5v23M62,5v23M70,5v23M79,5v23" stroke="#9a6c54" stroke-width="2.5" opacity=".6"/><rect x="60" y="50" width="27" height="40" fill="#6e341e"/><rect x="56" y="84" width="31" height="17" fill="#2a1e1a"/><rect x="0" y="78" width="16" height="23" fill="#8a7e74"/><path d="M31,42 Q13,44 9,58 L1,84 L7,92 L15,86 L17,101 L73,101 L75,86 L81,90 L85,76 L78,58 Q74,44 57,42 Z" fill="#2f3135"/><path d="M20,60 L16,88 M68,60 L72,86" stroke="#1e2023" stroke-width="1.5" fill="none"/><path d="M35,41 L52,41 L53,101 L32,101Z" fill="#b4bce0"/><path d="M34,41 L43,50 L52,41 L50,37 L36,37Z" fill="#c6cdea"/><path d="M31,42 L36,40 L34,101 L24,101Z M57,42 L52,40 L53,101 L64,101Z" fill="#292b2f"/><ellipse cx="8.5" cy="68" rx="4.2" ry="7.5" fill="#d0a088" transform="rotate(-15 8.5 68)"/><ellipse cx="80" cy="65" rx="5.5" ry="6.5" fill="#d0a088"/><path d="M36.0,37.1 L35.4,45.9 L43.0,49.0 L50.6,45.9 L50.0,37.1Z" fill="#d4a288"/><path d="M36.0,41.2 Q43.0,47.3 50.0,41.2 L50.6,45.9 L43.0,49.0 L35.4,45.9Z" fill="#00000026"/><ellipse cx="30.9" cy="30.3" rx="1.8" ry="3.1" fill="#d4a288"/><ellipse cx="55.1" cy="30.3" rx="1.8" ry="3.1" fill="#d4a288"/><ellipse cx="43.0" cy="23.4" rx="13.5" ry="13.6" fill="#121214"/><ellipse cx="43.0" cy="30.3" rx="11.3" ry="14.0" fill="#d4a288"/><ellipse cx="43.0" cy="15.6" rx="11.6" ry="5.1" fill="#121214"/><path d="M31.7,18.3 L31.4,27.5 L33.8,20.0Z M54.3,18.3 L54.6,27.5 L52.2,20.0Z" fill="#121214"/><ellipse cx="37.9" cy="27.9" rx="2.0" ry="1.0" fill="#2c201c"/><ellipse cx="48.1" cy="27.9" rx="2.0" ry="1.0" fill="#2c201c"/><path d="M35.2,25.5 Q37.9,24.5 40.6,25.7 M45.4,25.7 Q48.1,24.5 50.8,25.5" stroke="#2a1c18" stroke-width="1.0" fill="none" opacity=".8"/><path d="M41.4,34.0 Q43.0,35.2 44.9,34.0" stroke="#00000040" stroke-width="0.9" fill="none"/><path d="M39.0,37.8 Q43.0,39.1 47.0,37.8" stroke="#a8564c" stroke-width="1.1" fill="none" stroke-linecap="round"/><g fill="none" stroke="#2a2a2e" stroke-width="1"><rect x="33.8" y="25.7" width="8.1" height="4.4" rx="1.8"/><rect x="44.1" y="25.7" width="8.1" height="4.4" rx="1.8"/><path d="M41.9,27.2 L44.1,27.2 M33.8,27.2 L30.6,26.1 M52.2,27.2 L55.4,26.1"/></g></g></svg>
<svg style="left:14.5px;top:365.6px" width="66.0" height="85.3" viewBox="0 0 66.0 85.3"><clipPath id="cp7"><rect width="66.0" height="85.3"/></clipPath><g clip-path="url(#cp7)"><rect width="66" height="85.3" fill="#c9c9cd"/><path d="M22.0,60.0 C13.2,62.5 8.5,64.5 -2,70.0 L-2,87.3 L68,87.3 L68,70.0 C57.5,64.5 52.8,62.5 44.0,60.0 Z" fill="#2f4a52"/><path d="M20,62 L33,86 L46,62 L42,60 L33,72 L24,60Z" fill="#26362c"/><path d="M26,62 L33,74 L40,62Z" fill="#e0a890"/><path d="M22.1,50.1 L21.2,65.6 L33.0,70.9 L44.8,65.6 L43.9,50.1Z" fill="#e3ab93"/><path d="M22.1,57.2 Q33.0,68.0 43.9,57.2 L44.8,65.6 L33.0,70.9 L21.2,65.6Z" fill="#00000026"/><ellipse cx="14.1" cy="38.2" rx="2.7" ry="5.4" fill="#e3ab93"/><ellipse cx="51.9" cy="38.2" rx="2.7" ry="5.4" fill="#e3ab93"/><ellipse cx="33.0" cy="26.2" rx="21.0" ry="23.8" fill="#2a241f"/><ellipse cx="33.0" cy="38.2" rx="17.6" ry="24.4" fill="#e3ab93"/><ellipse cx="33.0" cy="12.5" rx="18.1" ry="8.9" fill="#2a241f"/><path d="M15.4,17.3 L14.9,33.4 L18.7,20.3Z M50.6,17.3 L51.1,33.4 L47.3,20.3Z" fill="#2a241f"/><ellipse cx="25.0" cy="34.0" rx="3.1" ry="1.7" fill="#2c201c"/><ellipse cx="41.0" cy="34.0" rx="3.1" ry="1.7" fill="#2c201c"/><path d="M20.8,29.8 Q25.0,28.0 29.2,30.1 M36.8,30.1 Q41.0,28.0 45.2,29.8" stroke="#2a1c18" stroke-width="1.7" fill="none" opacity=".8"/><path d="M30.5,44.7 Q33.0,46.8 35.9,44.7" stroke="#00000040" stroke-width="1.5" fill="none"/><path d="M26.7,51.3 Q33.0,53.7 39.3,51.3" stroke="#a8564c" stroke-width="1.9" fill="none" stroke-linecap="round"/><g fill="none" stroke="#5a5048" stroke-width="0.8"><rect x="18.7" y="30.1" width="12.6" height="7.7" rx="3.1"/><rect x="34.7" y="30.1" width="12.6" height="7.7" rx="3.1"/><path d="M31.3,32.8 L34.7,32.8 M18.7,32.8 L13.7,30.9 M47.3,32.8 L52.3,30.9"/></g><path d="M25,44 Q33,50 41,44 Q33,47 25,44Z" fill="#fff"/></g></svg>
<svg style="left:115.5px;top:372.0px" width="96.7" height="75.2" viewBox="0 0 96.7 75.2"><clipPath id="cp8"><rect width="96.7" height="75.2"/></clipPath><g clip-path="url(#cp8)"><rect width="96.7" height="75.2" fill="#a9c5ea"/><path d="M0,46 L20,40 L60,32 L97,20 L97,76 L0,76Z" fill="#9b978f"/><path d="M2,44 l6,-14 M10,46 l-6,-16 M14,42 l8,-12 M22,40 l-4,-12 M62,30 l4,-16 M70,28 l-5,-12 M76,26 l6,-14 M86,24 l-4,-16 M90,22 l5,-14 M94,22 l-3,-10" stroke="#7a7468" stroke-width="1.2"/><path d="M30,52 Q22,56 17,76 L97,76 L92,60 Q80,48 58,46 Z" fill="#6a7ab8"/><path d="M34,52 L44,50 L58,48 L52,76 L38,76Z" fill="#4e5256"/><path d="M30,52 L38,50 L40,76 L34,76Z" fill="#3a3e48"/><path d="M58,46 L64,52 L56,76 L50,76Z" fill="#444858"/><path d="M31.6,39.7 L30.9,51.0 L41.0,54.9 L51.1,51.0 L50.4,39.7Z" fill="#d99a7c"/><path d="M31.6,44.9 Q41.0,52.8 50.4,44.9 L51.1,51.0 L41.0,54.9 L30.9,51.0Z" fill="#00000026"/><ellipse cx="24.8" cy="31.0" rx="2.3" ry="3.9" fill="#d99a7c"/><ellipse cx="57.2" cy="31.0" rx="2.3" ry="3.9" fill="#d99a7c"/><ellipse cx="41.0" cy="23.2" rx="17.6" ry="11.7" fill="#6a4a38"/><ellipse cx="41.0" cy="29.3" rx="15.1" ry="20.0" fill="#d99a7c"/><ellipse cx="34.2" cy="28.0" rx="2.7" ry="1.2" fill="#2c201c"/><ellipse cx="47.8" cy="28.0" rx="2.7" ry="1.2" fill="#2c201c"/><path d="M30.6,24.9 Q34.2,23.6 37.8,25.1 M44.2,25.1 Q47.8,23.6 51.4,24.9" stroke="#2a1c18" stroke-width="1.2" fill="none" opacity=".8"/><path d="M38.8,35.8 Q41.0,37.3 43.5,35.8" stroke="#00000040" stroke-width="1.1" fill="none"/><path d="M35.6,40.6 Q41.0,42.3 46.4,40.6" stroke="#a8564c" stroke-width="1.4" fill="none" stroke-linecap="round"/><g fill="none" stroke="#8a7060" stroke-width="0.6"><rect x="28.8" y="25.1" width="10.8" height="5.7" rx="2.3"/><rect x="42.4" y="25.1" width="10.8" height="5.7" rx="2.3"/><path d="M39.6,27.1 L42.4,27.1 M28.8,27.1 L24.4,25.7 M53.2,27.1 L57.6,25.7"/></g></g></svg>
<svg style="left:235.4px;top:371.2px" width="68.6" height="86.6" viewBox="0 0 68.6 86.6"><clipPath id="cp9"><rect width="68.6" height="86.6"/></clipPath><g clip-path="url(#cp9)"><defs><linearGradient id="g9" x1="0" x2="0" y1="0" y2="1"><stop offset="0" stop-color="#4f96dc"/><stop offset=".38" stop-color="#9ac6ea"/><stop offset=".4" stop-color="#c0a888"/><stop offset="1" stop-color="#a88868"/></linearGradient></defs><rect width="68.6" height="86.6" fill="url(#g9)"/><rect y="60" width="14" height="27" fill="#6a5a4a" opacity=".6"/><path d="M42,42 Q50,32 62,36 L69,40 L69,66 L56,70 L46,60Z" fill="#a82a2c"/><path d="M50,44 L58,46 L60,70 L52,72Z" fill="#1e1e22"/><path d="M20,52 Q10,58 8,87 L62,87 L60,66 Q56,54 42,52Z" fill="#a9a28a"/><path d="M18,56 L24,54 L20,87 L14,87Z M44,54 L50,56 L50,87 L42,87Z" fill="#222226"/><path d="M23.3,44.4 L22.8,52.7 L29.5,55.6 L36.2,52.7 L35.7,44.4Z" fill="#d9a283"/><path d="M23.3,48.3 Q29.5,54.0 35.7,48.3 L36.2,52.7 L29.5,55.6 L22.8,52.7Z" fill="#00000026"/><ellipse cx="18.7" cy="38.1" rx="1.6" ry="2.9" fill="#d9a283"/><ellipse cx="40.3" cy="38.1" rx="1.6" ry="2.9" fill="#d9a283"/><ellipse cx="29.5" cy="38.1" rx="10.1" ry="13.0" fill="#d9a283"/><ellipse cx="24.9" cy="35.9" rx="1.8" ry="0.9" fill="#2c201c"/><ellipse cx="34.1" cy="35.9" rx="1.8" ry="0.9" fill="#2c201c"/><path d="M22.5,33.6 Q24.9,32.7 27.3,33.8 M31.7,33.8 Q34.1,32.7 36.5,33.6" stroke="#2a1c18" stroke-width="0.9" fill="none" opacity=".8"/><path d="M28.1,41.6 Q29.5,42.7 31.2,41.6" stroke="#00000040" stroke-width="0.8" fill="none"/><path d="M25.9,45.1 Q29.5,46.3 33.1,45.1" stroke="#a8564c" stroke-width="1.0" fill="none" stroke-linecap="round"/><path d="M16.5,30 Q17,16 29.5,15.5 Q42,16 42.5,30 Q29,25 16.5,30Z" fill="#a58e70"/><path d="M15,31 Q22,27 30,28 L30,31Z" fill="#8a7458"/><rect x="19" y="30.5" width="21" height="6" rx="3" fill="#1c1c20"/><path d="M24,42 Q29.5,47 35,42 Q29.5,44 24,42Z" fill="#fff"/></g></svg>
<svg style="left:319.3px;top:373.0px" width="67.5" height="85.5" viewBox="0 0 67.5 85.5"><clipPath id="cp10"><rect width="67.5" height="85.5"/></clipPath><g clip-path="url(#cp10)"><rect width="67.5" height="85.5" fill="#4c5244"/><rect width="67.5" height="9" fill="#9da3aa"/><path d="M0,9 Q20,2 40,10 Q55,16 68,12 L68,30 L0,30Z" fill="#4a5046"/><path d="M30,30 Q50,22 68,24 L68,62 L30,62Z" fill="#7c7c44"/><path d="M0,30 L30,30 L30,62 L0,62Z" fill="#5a6040"/><rect y="62" width="67.5" height="24" fill="#d9d9db"/><rect y="62" width="10" height="24" fill="#6a6a5a"/><path d="M14,36 Q6,40 3,62 L10,64 L12,56 L12,64 L52,64 L52,56 L56,64 L60,60 Q56,38 44,34 Z" fill="#e9e9eb"/><rect x="10" y="54" width="40" height="28" fill="#f4f4f4"/><rect x="12.5" y="56" width="35" height="22" fill="#5a5a5c"/><path d="M14,70 Q22,60 30,68 Q38,62 46,72" stroke="#bdbdbd" stroke-width="3" fill="none"/><ellipse cx="9" cy="80" rx="3.5" ry="3" fill="#d8a080"/><ellipse cx="51" cy="79" rx="3.5" ry="3" fill="#d8a080"/><rect x="4" y="62" width="5" height="17" fill="#d8a080" transform="rotate(8 6 70)"/><rect x="51" y="62" width="5" height="16" fill="#d8a080" transform="rotate(-8 53 70)"/><rect x="26" y="28" width="10" height="9" fill="#c89070"/><ellipse cx="31.5" cy="23" rx="9.5" ry="11" fill="#d09878"/><path d="M21,19 Q22,9.5 32,10 Q42,10.5 42,17 L46,19.5 L40,20 Q30,16 21,21Z" fill="#1a1a1c"/><path d="M21,20 Q19,28 23,32 L25,22Z" fill="#4a3020"/></g></svg>
<svg style="left:421.0px;top:363.5px" width="69.6" height="93.5" viewBox="0 0 69.6 93.5"><clipPath id="cp11"><rect width="69.6" height="93.5"/></clipPath><g clip-path="url(#cp11)"><rect width="69.6" height="93.5" fill="#1c7bd2"/><path d="M24.0,52.0 C15.2,54.5 9.1,56.5 -2,62.0 L-2,95.5 L71.6,95.5 L71.6,62.0 C60.6,56.5 54.8,54.5 46.0,52.0 Z" fill="#1a1c21"/><path d="M25,54 L35,72 L46,54 L42,52 L35,60 L28,52Z" fill="#4a2a2e"/><path d="M30,70 L40,70 L40,94 L30,94Z" fill="#121216"/><path d="M25.4,45.8 L24.6,58.0 L35.0,62.3 L45.4,58.0 L44.6,45.8Z" fill="#dab49c"/><path d="M25.4,51.4 Q35.0,59.9 44.6,51.4 L45.4,58.0 L35.0,62.3 L24.6,58.0Z" fill="#00000026"/><ellipse cx="18.3" cy="36.4" rx="2.4" ry="4.2" fill="#dab49c"/><ellipse cx="51.7" cy="36.4" rx="2.4" ry="4.2" fill="#dab49c"/><ellipse cx="35.0" cy="27.0" rx="18.5" ry="18.8" fill="#8c8c8e"/><ellipse cx="35.0" cy="36.4" rx="15.5" ry="19.3" fill="#dab49c"/><ellipse cx="35.0" cy="16.2" rx="15.9" ry="7.0" fill="#8c8c8e"/><path d="M19.5,19.9 L19.1,32.6 L22.4,22.3Z M50.5,19.9 L50.9,32.6 L47.6,22.3Z" fill="#8c8c8e"/><ellipse cx="28.0" cy="33.1" rx="2.8" ry="1.3" fill="#2c201c"/><ellipse cx="42.0" cy="33.1" rx="2.8" ry="1.3" fill="#2c201c"/><path d="M24.3,29.8 Q28.0,28.4 31.7,30.1 M38.3,30.1 Q42.0,28.4 45.7,29.8" stroke="#2a1c18" stroke-width="1.3" fill="none" opacity=".8"/><path d="M32.8,41.6 Q35.0,43.2 37.6,41.6" stroke="#00000040" stroke-width="1.2" fill="none"/><path d="M29.4,46.7 Q35.0,48.6 40.5,46.7" stroke="#a8564c" stroke-width="1.5" fill="none" stroke-linecap="round"/></g></svg>
<!--/PHOTOS-->
<!--LABELS-->
<div class="abs" style="left:541.6px;top:223.7px;width:86.4px;height:11.9px;background:#fff;border:1px solid #2846a0;font-weight:bold;font-size:7.85px;color:#000"><span id="l1" style="position:absolute;left:4.4px;top:50%;transform:translateY(-42%);white-space:nowrap;line-height:1;-webkit-text-stroke:.3px #000">Prof. Cong-Qiang Liu</span></div>
<div class="abs" style="left:2.6px;top:352.2px;width:94.2px;height:11.8px;background:#fff;border:1px solid #2846a0;font-weight:bold;font-size:7.85px;color:#000"><span id="l2" style="position:absolute;left:3.0px;top:50%;transform:translateY(-42%);white-space:nowrap;line-height:1;-webkit-text-stroke:.3px #000">Prof. Stewart Freeman</span></div>
<div class="abs" style="left:115.9px;top:353.3px;width:92.3px;height:11.3px;background:#fff;border:1px solid #2846a0;font-weight:bold;font-size:7.85px;color:#000"><span id="l3" style="position:absolute;left:2.8px;top:50%;transform:translateY(-42%);white-space:nowrap;line-height:1;-webkit-text-stroke:.3px #000">Prof. François</span></div>
<div class="abs" style="left:268.7px;top:358.3px;width:83.7px;height:10.9px;background:#fff;border:1px solid #2846a0;font-weight:bold;font-size:7.85px;color:#000"><span id="l4" style="position:absolute;left:3.0px;top:50%;transform:translateY(-42%);white-space:nowrap;line-height:1;-webkit-text-stroke:.3px #000">Prof. Tibor J. Dunai</span></div>
<div class="abs" style="left:544.2px;top:368.8px;width:75.7px;height:10.5px;background:#fff;font-weight:bold;font-size:7.85px;color:#000"><span id="l5" style="position:absolute;left:10.8px;top:50%;transform:translateY(-42%);white-space:nowrap;line-height:1;-webkit-text-stroke:.3px #000">Prof. Sheng Xu</span></div>
<div class="abs" style="left:12.3px;top:454.0px;width:69.7px;height:10.0px;background:#fff;font-weight:bold;font-size:7.85px;color:#000"><span id="l6" style="position:absolute;left:5.8px;top:50%;transform:translateY(-42%);white-space:nowrap;line-height:1;-webkit-text-stroke:.3px #000">Dr. Derek Fabel</span></div>
<div class="abs" style="left:108.8px;top:448.7px;width:112.9px;height:10.9px;background:#fff;border:1px solid #2846a0;font-weight:bold;font-size:7.85px;color:#000"><span id="l7" style="position:absolute;left:3.6px;top:50%;transform:translateY(-42%);white-space:nowrap;line-height:1;-webkit-text-stroke:.3px #000">Dr. Jérôme Van der Woerd</span></div>
<div class="abs" style="left:235.0px;top:459.6px;width:70.6px;height:11.0px;background:#fff;border:1px solid #2846a0;font-weight:bold;font-size:7.85px;color:#000"><span id="l8" style="position:absolute;left:2.7px;top:50%;transform:translateY(-42%);white-space:nowrap;line-height:1;-webkit-text-stroke:.3px #000">Dr. Steven Binnie</span></div>
<div class="abs" style="left:315.0px;top:460.7px;width:80.0px;height:10.3px;background:#fff;border:1px solid #2846a0;font-weight:bold;font-size:7.85px;color:#000"><span id="l9" style="position:absolute;left:4.0px;top:50%;transform:translateY(-42%);white-space:nowrap;line-height:1;-webkit-text-stroke:.3px #000">Dr. Benedikt Ritter</span></div>
<div class="abs" style="left:417.0px;top:459.0px;width:77.8px;height:11.2px;background:#fff;font-weight:bold;font-size:7.85px;color:#000"><span id="l10" style="position:absolute;left:5.2px;top:50%;transform:translateY(-42%);white-space:nowrap;line-height:1;-webkit-text-stroke:.3px #000">Prof. Zhi-Qi Zhao</span></div>
<!--/LABELS-->
<!--SLIDE-->
</div>
<!--STAGEUIX-->
<svg style="left:12px;top:49px" width="12" height="12" viewBox="0 0 12 12"><circle cx="6" cy="6" r="4.3" fill="none" stroke="#b53a3a" stroke-width=".9"/><circle cx="6" cy="6" r="2.7" fill="#c83636"/></svg>
<div class="t" style="left:31px;top:51px;font-size:7.8px;color:#f0f0f0" id="rec">录制中</div>
<div class="abs" style="left:8px;top:586px;width:92.5px;height:19.5px;background:#1f2124;border-radius:4px"></div>
<svg style="left:13px;top:590px" width="12" height="12" viewBox="0 0 12 12"><circle cx="6" cy="5.7" r="5.3" fill="#f2f2f2"/><circle cx="4.1" cy="4.2" r=".8" fill="#1f2124"/><circle cx="7.9" cy="4.2" r=".8" fill="#1f2124"/><path d="M2.6,6.2 H9.4 Q9,9.6 6,9.6 Q3,9.6 2.6,6.2Z" fill="#1f2124"/></svg>
<div class="abs" style="left:28px;top:590px;width:1px;height:12px;background:#4a4d52"></div>
<div class="t" style="left:37.5px;top:591.3px;font-size:7.9px;color:#d2d3d5" id="say">说点什么...</div>
<div class="abs" style="left:81px;top:590px;width:1px;height:12px;background:#4a4d52"></div>
<svg style="left:88px;top:592px" width="6" height="8" viewBox="0 0 6 8" fill="none" stroke="#e8e8e8" stroke-width="1.2"><path d="M4.8,.8 L1.2,4 L4.8,7.2"/></svg>
<svg style="left:128px;top:588px" width="6" height="8" viewBox="0 0 6 8"><path d="M.5,.5 L.5,6.5 L2,5.2 L3,7.5 L4,7 L3,4.8 L5,4.8Z" fill="#fff" stroke="#222" stroke-width=".4"/></svg>
<!-- collapse arrow between stage and vcol -->
<svg style="left:832px;top:349px" width="5" height="8" viewBox="0 0 5 8" fill="none" stroke="#b8babd" stroke-width="1"><path d="M1,1 L4,4 L1,7"/></svg>
<!--/STAGEUIX-->
<!--STAGEUI-->

<!-- ======= video column ======= -->
<div id="vcol" class="abs"></div>
<!--VCOLX-->
<div class="abs" style="left:840px;top:40px;width:180px;height:616px;background:linear-gradient(90deg,#54575b 0,#3a3c3f 25%,#151617 60%,#000 88%)"></div>
<div class="abs" style="left:1015px;top:40px;width:5px;height:616px;background:#000"></div>
<div class="abs" style="left:909px;top:46px;width:47px;height:10px;background:#1f2124;opacity:.9"></div>
<svg style="left:928.5px;top:50px" width="8" height="5" viewBox="0 0 8 5" fill="none" stroke="#c8c9cb" stroke-width="1"><path d="M.6,4.4 L4,1 L7.4,4.4"/></svg>
<div class="abs" style="left:846.4px;top:55.5px;width:168.6px;height:94px;background:#202225;border:1px solid #3b3d41;border-radius:2px"></div>
<svg style="left:906.7px;top:74.7px" width="46.2" height="46.2" viewBox="-23.1 -23.1 46.2 46.2"><clipPath id="av1"><circle r="23.1"/></clipPath><g clip-path="url(#av1)"><rect x="-24" y="-24" width="48" height="48" fill="#a9c99a"/><ellipse cx="-14" cy="14" rx="10" ry="5" fill="#dfeadb"/><path d="M-12,24 L-12,9 Q6,-1 24,-5 L24,24Z" fill="#b7c9a0"/><path d="M-12,9 Q6,-1 24,-5" stroke="#c8324a" stroke-width="2.6" fill="none"/><path d="M-12,15 Q6,5 24,1" stroke="#d85a6a" stroke-width="1.4" fill="none"/><path d="M-9,24v-14 M-3,24v-17 M3,24v-20 M9,24v-23 M15,24v-26 M21,24v-28" stroke="#c8324a" stroke-width="1.7" fill="none"/><path d="M-6,24 L4,18 L14,24Z" fill="#c8a070"/><path d="M-4,-10 q4,-8 9,-3 q3,4 -1,9 l3,8 l-5,3 l-4,-8z" fill="#f0e8e0"/><path d="M-2,-6 l8,6 l-2,8 l-6,-4z" fill="#7ab050"/><ellipse cx="1" cy="-12" rx="4.5" ry="4" fill="#6a4630"/><path d="M0,8 l-2,12 M3,8 l1,10" stroke="#e8b8a8" stroke-width="1.6"/></g></svg>
<div class="abs" style="left:848px;top:135.6px;width:118.6px;height:12.8px;background:rgba(28,30,33,.92);border-radius:0 2px 0 0"></div><div class="t" id="v1" style="left:873.7px;top:138.8px;font-size:7.45px;color:#fff">答辩秘书-陈碧莹的屏幕共享</div>
<svg style="left:849px;top:137.3px" width="9" height="9" viewBox="0 0 9 9"><rect x="0" y="0" width="9" height="6.4" rx=".6" fill="#fff"/><path d="M2.4,4.6 Q3,2.6 5,2.6 V1.6 L7,3.2 L5,4.8 V3.8 Q3.4,3.7 2.4,4.6Z" fill="#1f2124"/><rect x="2.4" y="7.6" width="4.2" height="1.1" fill="#fff"/></svg>
<svg style="left:861.5px;top:136.79999999999998px" width="8.4" height="11.6" viewBox="0 0 6.4 9.6"><path d="M3.2,0.3 h0 a1.6,1.6 0 0 1 1.6,1.6 v3 a1.6,1.6 0 0 1 -3.2,0 v-3 a1.6,1.6 0 0 1 1.6,-1.6z" fill="#fff"/><path d="M.4,4.6 a2.8,2.8 0 0 0 5.6,0 M3.2,7.4 v1.6 M1.6,9.2 h3.2" fill="none" stroke="#fff" stroke-width=".9"/></svg>
<div class="abs" style="left:846.4px;top:155.5px;width:168.6px;height:95px;background:#202225;border:1px solid #3b3d41;border-radius:2px"></div>
<svg style="left:906.9px;top:175.1px" width="46.4" height="46.4" viewBox="-23.2 -23.2 46.4 46.4"><clipPath id="av2"><circle r="23.2"/></clipPath><g clip-path="url(#av2)"><rect x="-24" y="-24" width="48" height="22" fill="#6cb0e8"/><rect x="-24" y="-6" width="48" height="4" fill="#a8d0e8"/><rect x="-24" y="-2.5" width="48" height="27" fill="#c4a66a"/><ellipse cx="-5" cy="4" rx="16" ry="9" fill="#e58f92"/><path d="M-20,2 Q-5,-4 10,2 M-20,6 Q-5,0 10,6" stroke="#f4c8c8" stroke-width="1.6" fill="none"/><ellipse cx="-4" cy="9" rx="14" ry="3" fill="#a85a60"/><rect x="8" y="-3" width="6" height="7" fill="#f0e020"/><circle cx="11" cy="-6" r="2.2" fill="#3a2a20"/><rect x="9" y="4" width="5" height="9" fill="#8a8a8a"/><rect x="4" y="6" width="5" height="9" fill="#f0f0c0"/><circle cx="6.5" cy="3.5" r="1.8" fill="#3a2a20"/><path d="M5,15v5M8,15v5" stroke="#d8a880" stroke-width="1.2"/></g></svg>
<div class="abs" style="left:848px;top:236.2px;width:13px;height:12.8px;background:#ff8a1f"></div>
<svg style="left:850px;top:238px" width="9" height="9" viewBox="0 0 9 9" fill="#fff"><circle cx="4.5" cy="2.6" r="2"/><path d="M.4,8.8 Q.6,5 4.5,5 Q8.4,5 8.6,8.8Z"/></svg>
<div class="abs" style="left:861px;top:236.2px;width:65.3px;height:12.8px;background:rgba(28,30,33,.92);border-radius:0 2px 0 0"></div><div class="t" id="v2" style="left:877px;top:239.4px;font-size:7.45px;color:#fff">教务员-王珊珊</div>
<svg style="left:864.7px;top:237.4px" width="8.4" height="11.6" viewBox="0 0 6.4 9.6"><path d="M3.2,0.3 h0 a1.6,1.6 0 0 1 1.6,1.6 v3 a1.6,1.6 0 0 1 -3.2,0 v-3 a1.6,1.6 0 0 1 1.6,-1.6z" fill="#d8d8d8"/><path d="M.4,4.6 a2.8,2.8 0 0 0 5.6,0 M3.2,7.4 v1.6 M1.6,9.2 h3.2" fill="none" stroke="#d8d8d8" stroke-width=".9"/><path d="M.2,8.6 L6.2,.8" stroke="#e5484d" stroke-width="1"/></svg>
<div class="abs" style="left:845px;top:255.5px;width:170px;height:95.5px;background:#34302e;border:1px solid #1ea35a;border-radius:2px"></div>
<svg style="left:924px;top:297.8px" width="12" height="12" viewBox="-6 -6 12 12"><path d="M-2.6,-4.6 A5.3,5.3 0 1 1 -4.6,2.6" fill="none" stroke="#f4f4f4" stroke-width="1.1" stroke-linecap="round"/></svg>
<div class="abs" style="left:848px;top:336.8px;width:50px;height:13px;background:rgba(28,30,33,.92);border-radius:0 2px 0 0"></div><div class="t" id="v3" style="left:863.2px;top:340.0px;font-size:7.45px;color:#fff">导师-徐胜</div>
<svg style="left:851.5px;top:338.1px" width="8.4" height="11.6" viewBox="0 0 6.4 9.6"><path d="M3.2,0.3 h0 a1.6,1.6 0 0 1 1.6,1.6 v3 a1.6,1.6 0 0 1 -3.2,0 v-3 a1.6,1.6 0 0 1 1.6,-1.6z" fill="#fff"/><path d="M.4,4.6 a2.8,2.8 0 0 0 5.6,0 M3.2,7.4 v1.6 M1.6,9.2 h3.2" fill="none" stroke="#fff" stroke-width=".9"/><rect x="1.6" y="3.6" width="3.2" height="2.9" rx="1.4" fill="#27c565"/></svg>
<div class="abs" style="left:841px;top:346px;width:1px;height:18px;background:#8a8c90"></div><div class="abs" style="left:843px;top:346px;width:1px;height:18px;background:#8a8c90"></div>
<div class="abs" style="left:846.4px;top:356.3px;width:168.6px;height:95.3px;background:#0b2c8c;border:1px solid #3b3d41;border-radius:2px"></div><svg style="left:847.8px;top:357.7px" width="165.2" height="92.7" viewBox="0 0 165.2 92.7"><defs><radialGradient id="bg4" cx="0.58" cy="0.6" r="0.75"><stop offset="0" stop-color="#0b2f98"/><stop offset=".5" stop-color="#09247a"/><stop offset="1" stop-color="#051446"/></radialGradient><filter id="gl4" x="-20%" y="-20%" width="140%" height="140%"><feGaussianBlur stdDeviation="2.2"/></filter><clipPath id="vc4"><rect width="165.2" height="92.7"/></clipPath></defs><g clip-path="url(#vc4)"><rect width="165.2" height="92.7" fill="url(#bg4)"/><g filter="url(#gl4)"><path d="M136,-6 Q166,46.4 124,100.7" fill="none" stroke="#1f7cf0" stroke-width="7" opacity=".85"/><path d="M0,46.4 Q60,66.7 120,96.7" fill="none" stroke="#1550c8" stroke-width="5" opacity=".45"/></g><path d="M138,-6 Q167,46.4 126,100.7" fill="none" stroke="#58a8ff" stroke-width="1" opacity=".7"/><text x="82.5" y="10" text-anchor="middle" font-family="Liberation Sans,sans-serif" font-weight="bold" font-size="5.5" fill="#f0c23c" textLength="154" lengthAdjust="spacingAndGlyphs">TIANJIN UNIVERSITY INTERNATIONAL  EDUCATION  PROGRAM</text><text x="82.5" y="17" text-anchor="middle" font-family="Liberation Sans,sans-serif" font-weight="bold" font-size="5.5" fill="#f0c23c" textLength="100" lengthAdjust="spacingAndGlyphs">FOR  OUTSTANDING  DOCTORAL  THESIS</text><path d="M30,93 Q50,78 78,80 Q110,76 136,93Z" fill="#8a2a2c"/><path d="M40,93 l10,-8 M60,93 l8,-10 M100,93 l-6,-10 M120,93 l-10,-8" stroke="#2a3a30" stroke-width="2"/><rect x="62" y="62" width="36" height="26" fill="#b07c5c"/><ellipse cx="77" cy="38" rx="30" ry="32" fill="#1c1614"/><ellipse cx="77" cy="52" rx="25.5" ry="36" fill="#c48e6c"/><ellipse cx="76" cy="26" rx="20" ry="12" fill="#c89472"/><path d="M50,44 Q48,20 62,12 Q54,30 54,46Z M104,44 Q108,20 92,10 Q100,28 100,46Z" fill="#1c1614"/><g fill="none" stroke="#8a8a90" stroke-width=".9"><rect x="53" y="43" width="19" height="11" rx="4"/><rect x="79" y="43" width="19" height="11" rx="4"/><path d="M72,47h7"/></g><path d="M58,47h10M84,47h10" stroke="#3a2a24" stroke-width="1.2"/><path d="M66,72 Q77,76 88,72" stroke="#a85a4c" stroke-width="1.6" fill="none"/><path d="M74,50 L70,64 L82,64" stroke="#b8805c" stroke-width="1" fill="none"/></g></svg>
<div class="abs" style="left:848px;top:437.5px;width:57px;height:13px;background:rgba(28,30,33,.92);border-radius:0 2px 0 0"></div><div class="t" id="v4" style="left:863.2px;top:440.7px;font-size:7.45px;color:#fff">主席-方小敏</div>
<svg style="left:851.5px;top:438.6px" width="8.4" height="11.6" viewBox="0 0 6.4 9.6"><path d="M3.2,0.3 h0 a1.6,1.6 0 0 1 1.6,1.6 v3 a1.6,1.6 0 0 1 -3.2,0 v-3 a1.6,1.6 0 0 1 1.6,-1.6z" fill="#fff"/><path d="M.4,4.6 a2.8,2.8 0 0 0 5.6,0 M3.2,7.4 v1.6 M1.6,9.2 h3.2" fill="none" stroke="#fff" stroke-width=".9"/></svg>
<div class="abs" style="left:846.4px;top:456.5px;width:168.6px;height:95.5px;background:#0b2c8c;border:1px solid #3b3d41;border-radius:2px"></div><svg style="left:847.8px;top:457.9px" width="165.2" height="92.9" viewBox="0 0 165.2 92.9"><defs><radialGradient id="bg5" cx="0.58" cy="0.6" r="0.75"><stop offset="0" stop-color="#0b2f98"/><stop offset=".5" stop-color="#09247a"/><stop offset="1" stop-color="#051446"/></radialGradient><filter id="gl5" x="-20%" y="-20%" width="140%" height="140%"><feGaussianBlur stdDeviation="2.2"/></filter><clipPath id="vc5"><rect width="165.2" height="92.9"/></clipPath></defs><g clip-path="url(#vc5)"><rect width="165.2" height="92.9" fill="url(#bg5)"/><g filter="url(#gl5)"><path d="M136,-6 Q166,46.5 124,100.9" fill="none" stroke="#1f7cf0" stroke-width="7" opacity=".85"/><path d="M0,46.5 Q60,66.9 120,96.9" fill="none" stroke="#1550c8" stroke-width="5" opacity=".45"/></g><path d="M138,-6 Q167,46.5 126,100.9" fill="none" stroke="#58a8ff" stroke-width="1" opacity=".7"/><text x="82.5" y="10" text-anchor="middle" font-family="Liberation Sans,sans-serif" font-weight="bold" font-size="5.5" fill="#f0c23c" textLength="154" lengthAdjust="spacingAndGlyphs">TIANJIN UNIVERSITY INTERNATIONAL  EDUCATION  PROGRAM</text><text x="82.5" y="17" text-anchor="middle" font-family="Liberation Sans,sans-serif" font-weight="bold" font-size="5.5" fill="#f0c23c" textLength="100" lengthAdjust="spacingAndGlyphs">FOR  OUTSTANDING  DOCTORAL  THESIS</text><rect x="66" y="84" width="26" height="12" fill="#222"/><ellipse cx="78" cy="66" rx="18" ry="17" fill="#a8a8a8"/><ellipse cx="78" cy="76" rx="15.5" ry="19" fill="#d8aa90"/><path d="M64,70h10M82,70h10" stroke="#4a3a34" stroke-width="1.2"/><path d="M72,88 Q78,90 84,88" stroke="#a8605a" stroke-width="1.2" fill="none"/></g></svg>
<div class="abs" style="left:848px;top:538px;width:61px;height:13px;background:rgba(28,30,33,.92);border-radius:0 2px 0 0"></div><div class="t" id="v5" style="left:863.2px;top:541.2px;font-size:7.45px;color:#fff">委员-Lu Xi Xi</div>
<svg style="left:851.5px;top:539.2px" width="8.4" height="11.6" viewBox="0 0 6.4 9.6"><path d="M3.2,0.3 h0 a1.6,1.6 0 0 1 1.6,1.6 v3 a1.6,1.6 0 0 1 -3.2,0 v-3 a1.6,1.6 0 0 1 1.6,-1.6z" fill="#fff"/><path d="M.4,4.6 a2.8,2.8 0 0 0 5.6,0 M3.2,7.4 v1.6 M1.6,9.2 h3.2" fill="none" stroke="#fff" stroke-width=".9"/></svg>
<div class="abs" style="left:846.4px;top:557.3px;width:168.6px;height:95px;background:#0b2c8c;border:1px solid #3b3d41;border-radius:2px"></div><svg style="left:847.8px;top:558.7px" width="165.2" height="92.4" viewBox="0 0 165.2 92.4"><defs><radialGradient id="bg6" cx="0.58" cy="0.6" r="0.75"><stop offset="0" stop-color="#0b2f98"/><stop offset=".5" stop-color="#09247a"/><stop offset="1" stop-color="#051446"/></radialGradient><filter id="gl6" x="-20%" y="-20%" width="140%" height="140%"><feGaussianBlur stdDeviation="2.2"/></filter><clipPath id="vc6"><rect width="165.2" height="92.4"/></clipPath></defs><g clip-path="url(#vc6)"><rect width="165.2" height="92.4" fill="url(#bg6)"/><g filter="url(#gl6)"><path d="M136,-6 Q166,46.2 124,100.4" fill="none" stroke="#1f7cf0" stroke-width="7" opacity=".85"/><path d="M0,46.2 Q60,66.5 120,96.4" fill="none" stroke="#1550c8" stroke-width="5" opacity=".45"/></g><path d="M138,-6 Q167,46.2 126,100.4" fill="none" stroke="#58a8ff" stroke-width="1" opacity=".7"/><text x="82.5" y="10" text-anchor="middle" font-family="Liberation Sans,sans-serif" font-weight="bold" font-size="5.5" fill="#f0c23c" textLength="154" lengthAdjust="spacingAndGlyphs">TIANJIN UNIVERSITY INTERNATIONAL  EDUCATION  PROGRAM</text><text x="82.5" y="17" text-anchor="middle" font-family="Liberation Sans,sans-serif" font-weight="bold" font-size="5.5" fill="#f0c23c" textLength="100" lengthAdjust="spacingAndGlyphs">FOR  OUTSTANDING  DOCTORAL  THESIS</text><path d="M38,93 Q42,66 66,58 L96,58 Q112,70 116,93Z" fill="#1f3149"/><path d="M62,60 L72,76 L84,58Z" fill="#c8d0e0"/><rect x="60" y="46" width="22" height="16" fill="#c89878"/><ellipse cx="70" cy="34" rx="18" ry="18" fill="#4a4848"/><ellipse cx="68" cy="42" rx="14.5" ry="19" fill="#d8a890"/><path d="M52,30 Q56,16 72,17 Q88,18 87,38 Q80,26 66,27 Q58,27 54,36Z" fill="#5a5858"/><g fill="none" stroke="#c8c8cc" stroke-width=".9"><rect x="51" y="38" width="13" height="8" rx="2"/><rect x="68" y="38" width="10" height="8" rx="2"/></g></g></svg>
<div class="abs" style="left:909.5px;top:633.3px;width:46.5px;height:12.7px;background:rgba(30,32,36,.88)"></div>
<svg style="left:928.5px;top:637.5px" width="8" height="5" viewBox="0 0 8 5" fill="none" stroke="#e8e8e8" stroke-width="1.1"><path d="M.6,.6 L4,4 L7.4,.6"/></svg>
<div class="abs" style="left:848px;top:638.4px;width:80px;height:12.8px;background:rgba(28,30,33,.92);border-radius:0 2px 0 0"></div><div class="t" id="v6" style="left:863.2px;top:641.6px;font-size:7.45px;color:#fff">委员-侯小琳 (DTU)</div>
<svg style="left:851.5px;top:639.6px" width="8.4" height="11.6" viewBox="0 0 6.4 9.6"><path d="M3.2,0.3 h0 a1.6,1.6 0 0 1 1.6,1.6 v3 a1.6,1.6 0 0 1 -3.2,0 v-3 a1.6,1.6 0 0 1 1.6,-1.6z" fill="#d8d8d8"/><path d="M.4,4.6 a2.8,2.8 0 0 0 5.6,0 M3.2,7.4 v1.6 M1.6,9.2 h3.2" fill="none" stroke="#d8d8d8" stroke-width=".9"/><path d="M.2,8.6 L6.2,.8" stroke="#e5484d" stroke-width="1"/></svg>
<!--/VCOLX-->
<!--VCOL-->

<!-- ======= members panel ======= -->
<div id="panel" class="abs"></div>
<!--PANELX-->
<div class="abs" style="left:1020px;top:40px;width:1.3px;height:616px;background:#9c9ea2"></div>
<div class="abs" style="left:1028.3px;top:41.7px;width:231.7px;height:19.5px;border:1px solid #cfd2d8;border-radius:3px;background:#fff"></div>
<svg style="left:1035px;top:47px" width="8" height="8" viewBox="0 0 8 8" fill="none" stroke="#4a4d52" stroke-width="1.1"><circle cx="3.3" cy="3.3" r="2.6"/><path d="M5.3,5.3L7.5,7.5"/></svg>
<div class="t" style="left:1044px;top:47.3px;font-size:8.05px;color:#a2a4a8">搜索成员</div>
<div class="abs" style="left:1090.2px;top:44px;width:160.6px;height:22.8px;background:#2a2c30;border-radius:3px;box-shadow:0 1px 3px rgba(0,0,0,.3)"></div>
<div class="abs" style="left:1112px;top:49px;width:1px;height:13px;background:#4a4d52"></div>
<div class="t" id="tip" style="left:1119px;top:51.4px;font-size:8.05px;color:#fff">正在讲话: 导师-徐胜; 主席...</div>
<svg style="left:1221px;top:49px" width="14" height="13" viewBox="0 0 14 13"><path d="M4,1 L8,6.5 L4,12 L0,6.5Z" fill="#3a3c41"/><path d="M10,1 L14,6.5 L10,12 L6,6.5Z" fill="#44464b"/></svg>
<svg style="left:1235px;top:51px" width="10" height="9" viewBox="0 0 10 9"><path d="M4.2,.4 L.4,3.6 L4.2,6.8 V4.8 Q7.6,4.6 9.4,8.4 Q9.4,2.8 4.2,2.4Z" fill="#8a8c90"/></svg>
<svg style="left:1098.0px;top:50.0px" width="7" height="11" viewBox="0 0 7 10.6"><path d="M3.5,0.3 a1.9,1.9 0 0 1 1.9,1.9 v3.4 a1.9,1.9 0 0 1 -3.8,0 v-3.4 a1.9,1.9 0 0 1 1.9,-1.9z" fill="#8a8c90"/><path d="M.5,5.2 a3,3 0 0 0 6,0 M3.5,8.2 v1.8 M1.8,10.2 h3.4" fill="none" stroke="#8a8c90" stroke-width=".9"/><path d="M-.6,9.6 L7.6,.2" stroke="#f0868a" stroke-width="1"/></svg>
<svg style="left:1032.2px;top:77.3px" width="19.6" height="19.6" viewBox="-9.8 -9.8 19.6 19.6"><clipPath id="pa0"><circle r="9.8"/></clipPath><g clip-path="url(#pa0)"><rect x="-10" y="-10" width="20" height="10" fill="#6cb0e8"/><rect x="-10" y="-1" width="20" height="11" fill="#c4a66a"/><ellipse cx="-2" cy="1.5" rx="7" ry="3.6" fill="#e58f92"/><rect x="3.5" y="-1" width="2.4" height="5" fill="#e8d840"/></g></svg>
<div class="t" id="n0" style="left:1058.6px;top:78.8px;font-size:8.05px;color:#1d1d1f">教务员-王珊珊</div>
<div class="t" style="left:1058.6px;top:90.5px;font-size:8.05px;color:#7a7c80">(主持人, 我)</div>
<svg style="left:1232.8px;top:81.6px" width="7" height="11" viewBox="0 0 7 10.6"><path d="M3.5,0.3 a1.9,1.9 0 0 1 1.9,1.9 v3.4 a1.9,1.9 0 0 1 -3.8,0 v-3.4 a1.9,1.9 0 0 1 1.9,-1.9z" fill="#c9cacd"/><path d="M.5,5.2 a3,3 0 0 0 6,0 M3.5,8.2 v1.8 M1.8,10.2 h3.4" fill="none" stroke="#c9cacd" stroke-width=".9"/><path d="M-.6,9.6 L7.6,.2" stroke="#f0868a" stroke-width="1"/></svg>
<svg style="left:1247.0px;top:83.1px" width="10" height="8" viewBox="0 0 10 8"><rect x="0" y="1.2" width="6.6" height="5.6" rx=".8" fill="#c9cacd"/><path d="M6.9,3.6 L9.8,1.6 V6.4 L6.9,4.4Z" fill="#c9cacd"/><path d="M-.4,7.6 L9.6,.2" stroke="#f0868a" stroke-width="1"/></svg>
<svg style="left:1032.2px;top:106.3px" width="19.6" height="19.6" viewBox="-9.8 -9.8 19.6 19.6"><clipPath id="pa1"><circle r="9.8"/></clipPath><g clip-path="url(#pa1)"><rect x="-10" y="-10" width="20" height="20" fill="#a9c99a"/><path d="M-6,10 L-6,3 Q2,-1 10,-2.5 L10,10Z" fill="#c8324a"/><path d="M-1,-4 l3,0 l1,6 l-4,1z" fill="#f0ece4"/><circle cx=".5" cy="-5.5" r="2" fill="#6a4630"/></g></svg>
<div class="t" id="n1" style="left:1058.6px;top:113.2px;font-size:8.05px;color:#1d1d1f">答辩秘书-陈碧莹</div>
<svg style="left:1232.8px;top:110.6px" width="7" height="11" viewBox="0 0 7 10.6"><path d="M3.5,0.3 a1.9,1.9 0 0 1 1.9,1.9 v3.4 a1.9,1.9 0 0 1 -3.8,0 v-3.4 a1.9,1.9 0 0 1 1.9,-1.9z" fill="#c9cacd"/><path d="M.5,5.2 a3,3 0 0 0 6,0 M3.5,8.2 v1.8 M1.8,10.2 h3.4" fill="none" stroke="#c9cacd" stroke-width=".9"/></svg>
<svg style="left:1247.0px;top:112.1px" width="10" height="8" viewBox="0 0 10 8"><rect x="0" y="1.2" width="6.6" height="5.6" rx=".8" fill="#c9cacd"/><path d="M6.9,3.6 L9.8,1.6 V6.4 L6.9,4.4Z" fill="#c9cacd"/><path d="M-.4,7.6 L9.6,.2" stroke="#f0868a" stroke-width="1"/></svg>
<svg style="left:1032.2px;top:135.4px" width="19.6" height="19.6" viewBox="-9.8 -9.8 19.6 19.6"><clipPath id="pa2"><circle r="9.8"/></clipPath><g clip-path="url(#pa2)"><rect x="-10" y="-10" width="20" height="20" fill="#4a78c0"/><path d="M-10,10 V-2 L-6,-4 L-4,-9 L-2,-3 L1,-2 V10Z" fill="#141c30"/><path d="M1,10 V2 L6,-1 L10,1 V10Z" fill="#1c2840"/><circle cx="4" cy="-3" r="3" fill="#a8c8f0"/></g></svg>
<div class="t" id="n2" style="left:1058.6px;top:142.3px;font-size:8.05px;color:#1d1d1f">导师-徐胜</div>
<svg style="left:1232.8px;top:139.7px" width="7" height="11" viewBox="0 0 7 10.6"><path d="M3.5,0.3 a1.9,1.9 0 0 1 1.9,1.9 v3.4 a1.9,1.9 0 0 1 -3.8,0 v-3.4 a1.9,1.9 0 0 1 1.9,-1.9z" fill="#d0d1d4"/><path d="M.5,5.2 a3,3 0 0 0 6,0 M3.5,8.2 v1.8 M1.8,10.2 h3.4" fill="none" stroke="#d0d1d4" stroke-width=".9"/><rect x="1.5" y=".2" width="4" height="7.4" rx="2" fill="#3fe01f"/></svg>
<svg style="left:1247.0px;top:141.2px" width="10" height="8" viewBox="0 0 10 8"><rect x="0" y="1.2" width="6.6" height="5.6" rx=".8" fill="#c9cacd"/><path d="M6.9,3.6 L9.8,1.6 V6.4 L6.9,4.4Z" fill="#c9cacd"/></svg>
<svg style="left:1032.2px;top:164.5px" width="19.6" height="19.6" viewBox="-9.8 -9.8 19.6 19.6"><clipPath id="pa3"><circle r="9.8"/></clipPath><g clip-path="url(#pa3)"><rect x="-10" y="-10" width="20" height="20" fill="#0a6cff"/><text x="0" y="2.7" text-anchor="middle" font-size="7.4" fill="#fff" font-family="Liberation Sans,Noto Sans CJK SC,sans-serif">Xi</text></g></svg>
<div class="t" id="n3" style="left:1058.6px;top:171.4px;font-size:8.05px;color:#1d1d1f">委员-Lu Xi Xi</div>
<svg style="left:1232.8px;top:168.8px" width="7" height="11" viewBox="0 0 7 10.6"><path d="M3.5,0.3 a1.9,1.9 0 0 1 1.9,1.9 v3.4 a1.9,1.9 0 0 1 -3.8,0 v-3.4 a1.9,1.9 0 0 1 1.9,-1.9z" fill="#c9cacd"/><path d="M.5,5.2 a3,3 0 0 0 6,0 M3.5,8.2 v1.8 M1.8,10.2 h3.4" fill="none" stroke="#c9cacd" stroke-width=".9"/></svg>
<svg style="left:1247.0px;top:170.3px" width="10" height="8" viewBox="0 0 10 8"><rect x="0" y="1.2" width="6.6" height="5.6" rx=".8" fill="#c9cacd"/><path d="M6.9,3.6 L9.8,1.6 V6.4 L6.9,4.4Z" fill="#c9cacd"/></svg>
<svg style="left:1032.2px;top:193.6px" width="19.6" height="19.6" viewBox="-9.8 -9.8 19.6 19.6"><clipPath id="pa4"><circle r="9.8"/></clipPath><g clip-path="url(#pa4)"><rect x="-10" y="-10" width="20" height="20" fill="#6c8cb4"/><rect x="-10" y="3" width="20" height="7" fill="#4a6a80"/><ellipse cx="0" cy="5" rx="3" ry="5" fill="#d8c890"/><circle cx="0" cy="-2" r="2" fill="#3a2a20"/></g></svg>
<div class="t" id="n4" style="left:1058.6px;top:200.5px;font-size:8.05px;color:#1d1d1f">主席-方小敏</div>
<svg style="left:1232.8px;top:197.9px" width="7" height="11" viewBox="0 0 7 10.6"><path d="M3.5,0.3 a1.9,1.9 0 0 1 1.9,1.9 v3.4 a1.9,1.9 0 0 1 -3.8,0 v-3.4 a1.9,1.9 0 0 1 1.9,-1.9z" fill="#c9cacd"/><path d="M.5,5.2 a3,3 0 0 0 6,0 M3.5,8.2 v1.8 M1.8,10.2 h3.4" fill="none" stroke="#c9cacd" stroke-width=".9"/></svg>
<svg style="left:1247.0px;top:199.4px" width="10" height="8" viewBox="0 0 10 8"><rect x="0" y="1.2" width="6.6" height="5.6" rx=".8" fill="#c9cacd"/><path d="M6.9,3.6 L9.8,1.6 V6.4 L6.9,4.4Z" fill="#c9cacd"/></svg>
<div class="abs" style="left:1021.3px;top:218.0px;width:241.2px;height:29px;background:#f0f1f5"></div>
<svg style="left:1032.2px;top:222.7px" width="19.6" height="19.6" viewBox="-9.8 -9.8 19.6 19.6"><clipPath id="pa5"><circle r="9.8"/></clipPath><g clip-path="url(#pa5)"><rect x="-10" y="-10" width="20" height="20" fill="#ece2e6"/><rect x="-10" y="4" width="20" height="6" fill="#8ab0d8"/><path d="M-3,4 L0,-4 L3,4Z" fill="#d84a4a"/><circle cx="0" cy="-5" r="1.6" fill="#2a2020"/></g></svg>
<div class="t" id="n5" style="left:1058.6px;top:229.6px;font-size:8.05px;color:#1d1d1f">答辩人-杨业(Yang,Ye)</div>
<svg style="left:1232.8px;top:227.0px" width="7" height="11" viewBox="0 0 7 10.6"><path d="M3.5,0.3 a1.9,1.9 0 0 1 1.9,1.9 v3.4 a1.9,1.9 0 0 1 -3.8,0 v-3.4 a1.9,1.9 0 0 1 1.9,-1.9z" fill="#c9cacd"/><path d="M.5,5.2 a3,3 0 0 0 6,0 M3.5,8.2 v1.8 M1.8,10.2 h3.4" fill="none" stroke="#c9cacd" stroke-width=".9"/><path d="M-.6,9.6 L7.6,.2" stroke="#f0868a" stroke-width="1"/></svg>
<svg style="left:1247.0px;top:228.5px" width="10" height="8" viewBox="0 0 10 8"><rect x="0" y="1.2" width="6.6" height="5.6" rx=".8" fill="#c9cacd"/><path d="M6.9,3.6 L9.8,1.6 V6.4 L6.9,4.4Z" fill="#c9cacd"/></svg>
<svg style="left:1032.2px;top:251.7px" width="19.6" height="19.6" viewBox="-9.8 -9.8 19.6 19.6"><clipPath id="pa6"><circle r="9.8"/></clipPath><g clip-path="url(#pa6)"><rect x="-10" y="-10" width="20" height="20" fill="#4a3c34"/><ellipse cx="3" cy="-2" rx="5" ry="6" fill="#e8e0d8"/><ellipse cx="-4" cy="4" rx="5" ry="4" fill="#1c1816"/></g></svg>
<div class="t" id="n6" style="left:1058.6px;top:258.6px;font-size:8.05px;color:#1d1d1f">委员-Rob Ellam</div>
<svg style="left:1232.8px;top:256.0px" width="7" height="11" viewBox="0 0 7 10.6"><path d="M3.5,0.3 a1.9,1.9 0 0 1 1.9,1.9 v3.4 a1.9,1.9 0 0 1 -3.8,0 v-3.4 a1.9,1.9 0 0 1 1.9,-1.9z" fill="#c9cacd"/><path d="M.5,5.2 a3,3 0 0 0 6,0 M3.5,8.2 v1.8 M1.8,10.2 h3.4" fill="none" stroke="#c9cacd" stroke-width=".9"/><path d="M-.6,9.6 L7.6,.2" stroke="#f0868a" stroke-width="1"/></svg>
<svg style="left:1247.0px;top:257.5px" width="10" height="8" viewBox="0 0 10 8"><rect x="0" y="1.2" width="6.6" height="5.6" rx=".8" fill="#c9cacd"/><path d="M6.9,3.6 L9.8,1.6 V6.4 L6.9,4.4Z" fill="#c9cacd"/></svg>
<svg style="left:1032.2px;top:280.8px" width="19.6" height="19.6" viewBox="-9.8 -9.8 19.6 19.6"><clipPath id="pa7"><circle r="9.8"/></clipPath><g clip-path="url(#pa7)"><rect x="-10" y="-10" width="20" height="8" fill="#8ac0e8"/><rect x="-10" y="-2" width="20" height="12" fill="#3a8ab8"/><ellipse cx="0" cy="-1" rx="8" ry="2" fill="#2a3a38"/></g></svg>
<div class="t" id="n7" style="left:1058.6px;top:287.7px;font-size:8.05px;color:#1d1d1f">委员-侯小琳 (DTU)</div>
<svg style="left:1232.8px;top:285.1px" width="7" height="11" viewBox="0 0 7 10.6"><path d="M3.5,0.3 a1.9,1.9 0 0 1 1.9,1.9 v3.4 a1.9,1.9 0 0 1 -3.8,0 v-3.4 a1.9,1.9 0 0 1 1.9,-1.9z" fill="#c9cacd"/><path d="M.5,5.2 a3,3 0 0 0 6,0 M3.5,8.2 v1.8 M1.8,10.2 h3.4" fill="none" stroke="#c9cacd" stroke-width=".9"/><path d="M-.6,9.6 L7.6,.2" stroke="#f0868a" stroke-width="1"/></svg>
<svg style="left:1247.0px;top:286.6px" width="10" height="8" viewBox="0 0 10 8"><rect x="0" y="1.2" width="6.6" height="5.6" rx=".8" fill="#c9cacd"/><path d="M6.9,3.6 L9.8,1.6 V6.4 L6.9,4.4Z" fill="#c9cacd"/></svg>
<svg style="left:1032.2px;top:309.9px" width="19.6" height="19.6" viewBox="-9.8 -9.8 19.6 19.6"><clipPath id="pa8"><circle r="9.8"/></clipPath><g clip-path="url(#pa8)"><rect x="-10" y="-10" width="20" height="20" fill="#b9b29a"/><ellipse cx="0" cy="2" rx="4" ry="7" fill="#e8e4dc"/><circle cx="0" cy="-5" r="2.2" fill="#6a5040"/><rect x="-10" y="6" width="20" height="4" fill="#7a8a60"/></g></svg>
<div class="t" id="n8" style="left:1058.6px;top:316.8px;font-size:8.05px;color:#1d1d1f">院长-刘丛强</div>
<svg style="left:1232.8px;top:314.2px" width="7" height="11" viewBox="0 0 7 10.6"><path d="M3.5,0.3 a1.9,1.9 0 0 1 1.9,1.9 v3.4 a1.9,1.9 0 0 1 -3.8,0 v-3.4 a1.9,1.9 0 0 1 1.9,-1.9z" fill="#c9cacd"/><path d="M.5,5.2 a3,3 0 0 0 6,0 M3.5,8.2 v1.8 M1.8,10.2 h3.4" fill="none" stroke="#c9cacd" stroke-width=".9"/><path d="M-.6,9.6 L7.6,.2" stroke="#f0868a" stroke-width="1"/></svg>
<svg style="left:1247.0px;top:315.7px" width="10" height="8" viewBox="0 0 10 8"><rect x="0" y="1.2" width="6.6" height="5.6" rx=".8" fill="#c9cacd"/><path d="M6.9,3.6 L9.8,1.6 V6.4 L6.9,4.4Z" fill="#c9cacd"/></svg>
<svg style="left:1032.2px;top:339.0px" width="19.6" height="19.6" viewBox="-9.8 -9.8 19.6 19.6"><clipPath id="pa9"><circle r="9.8"/></clipPath><g clip-path="url(#pa9)"><rect x="-10" y="-10" width="20" height="20" fill="#b89c74"/><ellipse cx="0" cy="3" rx="5" ry="7" fill="#e0c8a8"/><circle cx="0" cy="-4" r="2.4" fill="#5a4030"/></g></svg>
<div class="t" id="n9" style="left:1058.6px;top:345.9px;font-size:8.05px;color:#1d1d1f">答辩人-陈贝贝</div>
<svg style="left:1232.8px;top:343.3px" width="7" height="11" viewBox="0 0 7 10.6"><path d="M3.5,0.3 a1.9,1.9 0 0 1 1.9,1.9 v3.4 a1.9,1.9 0 0 1 -3.8,0 v-3.4 a1.9,1.9 0 0 1 1.9,-1.9z" fill="#c9cacd"/><path d="M.5,5.2 a3,3 0 0 0 6,0 M3.5,8.2 v1.8 M1.8,10.2 h3.4" fill="none" stroke="#c9cacd" stroke-width=".9"/><path d="M-.6,9.6 L7.6,.2" stroke="#f0868a" stroke-width="1"/></svg>
<svg style="left:1247.0px;top:344.8px" width="10" height="8" viewBox="0 0 10 8"><rect x="0" y="1.2" width="6.6" height="5.6" rx=".8" fill="#c9cacd"/><path d="M6.9,3.6 L9.8,1.6 V6.4 L6.9,4.4Z" fill="#c9cacd"/><path d="M-.4,7.6 L9.6,.2" stroke="#f0868a" stroke-width="1"/></svg>
<div class="abs" style="left:1021.3px;top:363.4px;width:241.2px;height:29px;background:#f0f1f5"></div>
<svg style="left:1032.2px;top:368.1px" width="19.6" height="19.6" viewBox="-9.8 -9.8 19.6 19.6"><clipPath id="pa10"><circle r="9.8"/></clipPath><g clip-path="url(#pa10)"><rect x="-10" y="-10" width="20" height="20" fill="#3c4432"/><path d="M-2,-10 L2,-10 L4,10 L-3,10Z" fill="#d8dcd8"/><ellipse cx="-6" cy="4" rx="4" ry="6" fill="#2a3020"/></g></svg>
<div class="t" id="n10" style="left:1058.6px;top:375.0px;font-size:8.05px;color:#1d1d1f">导师-李思亮</div>
<svg style="left:1232.8px;top:372.4px" width="7" height="11" viewBox="0 0 7 10.6"><path d="M3.5,0.3 a1.9,1.9 0 0 1 1.9,1.9 v3.4 a1.9,1.9 0 0 1 -3.8,0 v-3.4 a1.9,1.9 0 0 1 1.9,-1.9z" fill="#c9cacd"/><path d="M.5,5.2 a3,3 0 0 0 6,0 M3.5,8.2 v1.8 M1.8,10.2 h3.4" fill="none" stroke="#c9cacd" stroke-width=".9"/><path d="M-.6,9.6 L7.6,.2" stroke="#f0868a" stroke-width="1"/></svg>
<svg style="left:1247.0px;top:373.9px" width="10" height="8" viewBox="0 0 10 8"><rect x="0" y="1.2" width="6.6" height="5.6" rx=".8" fill="#c9cacd"/><path d="M6.9,3.6 L9.8,1.6 V6.4 L6.9,4.4Z" fill="#c9cacd"/><path d="M-.4,7.6 L9.6,.2" stroke="#f0868a" stroke-width="1"/></svg>
<svg style="left:1032.2px;top:397.1px" width="19.6" height="19.6" viewBox="-9.8 -9.8 19.6 19.6"><clipPath id="pa11"><circle r="9.8"/></clipPath><g clip-path="url(#pa11)"><rect x="-10" y="-10" width="20" height="11" fill="#7cb2e4"/><rect x="-10" y="1" width="20" height="9" fill="#6a9a50"/><path d="M-10,3 Q0,-2 10,2 V5 Q0,1 -10,6Z" fill="#c8d0c0"/></g></svg>
<div class="t" id="n11" style="left:1058.6px;top:404.0px;font-size:8.05px;color:#1d1d1f">旁听</div>
<svg style="left:1232.8px;top:401.4px" width="7" height="11" viewBox="0 0 7 10.6"><path d="M3.5,0.3 a1.9,1.9 0 0 1 1.9,1.9 v3.4 a1.9,1.9 0 0 1 -3.8,0 v-3.4 a1.9,1.9 0 0 1 1.9,-1.9z" fill="#c9cacd"/><path d="M.5,5.2 a3,3 0 0 0 6,0 M3.5,8.2 v1.8 M1.8,10.2 h3.4" fill="none" stroke="#c9cacd" stroke-width=".9"/><path d="M-.6,9.6 L7.6,.2" stroke="#f0868a" stroke-width="1"/></svg>
<svg style="left:1247.0px;top:402.9px" width="10" height="8" viewBox="0 0 10 8"><rect x="0" y="1.2" width="6.6" height="5.6" rx=".8" fill="#c9cacd"/><path d="M6.9,3.6 L9.8,1.6 V6.4 L6.9,4.4Z" fill="#c9cacd"/><path d="M-.4,7.6 L9.6,.2" stroke="#f0868a" stroke-width="1"/></svg>
<svg style="left:1032.2px;top:426.2px" width="19.6" height="19.6" viewBox="-9.8 -9.8 19.6 19.6"><clipPath id="pa12"><circle r="9.8"/></clipPath><g clip-path="url(#pa12)"><rect x="-10" y="-10" width="20" height="20" fill="#f6f2f0"/><ellipse cx="0" cy="-2" rx="6" ry="7" fill="#1c1418"/><ellipse cx=".5" cy="-1" rx="3.6" ry="4.4" fill="#f4d8c8"/><path d="M-5,10 Q0,2 6,10Z" fill="#c83a3a"/></g></svg>
<div class="t" id="n12" style="left:1058.6px;top:433.1px;font-size:8.05px;color:#1d1d1f">旁听 方鲁加</div>
<svg style="left:1232.8px;top:430.5px" width="7" height="11" viewBox="0 0 7 10.6"><path d="M3.5,0.3 a1.9,1.9 0 0 1 1.9,1.9 v3.4 a1.9,1.9 0 0 1 -3.8,0 v-3.4 a1.9,1.9 0 0 1 1.9,-1.9z" fill="#c9cacd"/><path d="M.5,5.2 a3,3 0 0 0 6,0 M3.5,8.2 v1.8 M1.8,10.2 h3.4" fill="none" stroke="#c9cacd" stroke-width=".9"/><path d="M-.6,9.6 L7.6,.2" stroke="#f0868a" stroke-width="1"/></svg>
<svg style="left:1247.0px;top:432.0px" width="10" height="8" viewBox="0 0 10 8"><rect x="0" y="1.2" width="6.6" height="5.6" rx=".8" fill="#c9cacd"/><path d="M6.9,3.6 L9.8,1.6 V6.4 L6.9,4.4Z" fill="#c9cacd"/><path d="M-.4,7.6 L9.6,.2" stroke="#f0868a" stroke-width="1"/></svg>
<svg style="left:1032.2px;top:455.3px" width="19.6" height="19.6" viewBox="-9.8 -9.8 19.6 19.6"><clipPath id="pa13"><circle r="9.8"/></clipPath><g clip-path="url(#pa13)"><rect x="-10" y="-10" width="20" height="20" fill="#f0f4e4"/><circle cx="-3" cy="-1" r="3.4" fill="#fff"/><circle cx="3" cy="2" r="3.4" fill="#fdfdf6"/><circle cx="-2" cy="6" r="2" fill="#d86a6a"/><circle cx="3" cy="-5" r="2.4" fill="#dce8c8"/></g></svg>
<div class="t" id="n13" style="left:1058.6px;top:462.2px;font-size:8.05px;color:#1d1d1f">旁听 吴文欣</div>
<svg style="left:1232.8px;top:459.6px" width="7" height="11" viewBox="0 0 7 10.6"><path d="M3.5,0.3 a1.9,1.9 0 0 1 1.9,1.9 v3.4 a1.9,1.9 0 0 1 -3.8,0 v-3.4 a1.9,1.9 0 0 1 1.9,-1.9z" fill="#c9cacd"/><path d="M.5,5.2 a3,3 0 0 0 6,0 M3.5,8.2 v1.8 M1.8,10.2 h3.4" fill="none" stroke="#c9cacd" stroke-width=".9"/><path d="M-.6,9.6 L7.6,.2" stroke="#f0868a" stroke-width="1"/></svg>
<svg style="left:1247.0px;top:461.1px" width="10" height="8" viewBox="0 0 10 8"><rect x="0" y="1.2" width="6.6" height="5.6" rx=".8" fill="#c9cacd"/><path d="M6.9,3.6 L9.8,1.6 V6.4 L6.9,4.4Z" fill="#c9cacd"/><path d="M-.4,7.6 L9.6,.2" stroke="#f0868a" stroke-width="1"/></svg>
<svg style="left:1032.2px;top:484.4px" width="19.6" height="19.6" viewBox="-9.8 -9.8 19.6 19.6"><clipPath id="pa14"><circle r="9.8"/></clipPath><g clip-path="url(#pa14)"><rect x="-10" y="-10" width="20" height="20" fill="#0c0c0e"/><circle cx=".5" cy="-2" r="3.4" fill="none" stroke="#fff" stroke-width="2.2"/><path d="M-6,2.5 Q-2,8 5,5 L4,1.5Z" fill="#fff"/></g></svg>
<div class="t" id="n14" style="left:1058.6px;top:491.3px;font-size:8.05px;color:#1d1d1f">旁听-J.Su</div>
<svg style="left:1232.8px;top:488.7px" width="7" height="11" viewBox="0 0 7 10.6"><path d="M3.5,0.3 a1.9,1.9 0 0 1 1.9,1.9 v3.4 a1.9,1.9 0 0 1 -3.8,0 v-3.4 a1.9,1.9 0 0 1 1.9,-1.9z" fill="#c9cacd"/><path d="M.5,5.2 a3,3 0 0 0 6,0 M3.5,8.2 v1.8 M1.8,10.2 h3.4" fill="none" stroke="#c9cacd" stroke-width=".9"/><path d="M-.6,9.6 L7.6,.2" stroke="#f0868a" stroke-width="1"/></svg>
<svg style="left:1247.0px;top:490.2px" width="10" height="8" viewBox="0 0 10 8"><rect x="0" y="1.2" width="6.6" height="5.6" rx=".8" fill="#c9cacd"/><path d="M6.9,3.6 L9.8,1.6 V6.4 L6.9,4.4Z" fill="#c9cacd"/><path d="M-.4,7.6 L9.6,.2" stroke="#f0868a" stroke-width="1"/></svg>
<div class="abs" style="left:1021.3px;top:508.8px;width:241.2px;height:29px;background:#f0f1f5"></div>
<svg style="left:1032.2px;top:513.5px" width="19.6" height="19.6" viewBox="-9.8 -9.8 19.6 19.6"><clipPath id="pa15"><circle r="9.8"/></clipPath><g clip-path="url(#pa15)"><rect x="-10" y="-10" width="20" height="20" fill="#f3e6b0"/><ellipse cx="0" cy="-1" rx="4.6" ry="5" fill="#f8e8a0" stroke="#c8a850" stroke-width=".6"/><ellipse cx="0" cy="6" rx="3.6" ry="3.4" fill="#e8c868"/><path d="M-3,-4 l-2,-3 M3,-4 l2,-3" stroke="#c8a850" stroke-width="1"/></g></svg>
<div class="t" id="n15" style="left:1058.6px;top:520.4px;font-size:8.05px;color:#1d1d1f">旁听-YuanyuanZhang</div>
<svg style="left:1232.8px;top:517.8px" width="7" height="11" viewBox="0 0 7 10.6"><path d="M3.5,0.3 a1.9,1.9 0 0 1 1.9,1.9 v3.4 a1.9,1.9 0 0 1 -3.8,0 v-3.4 a1.9,1.9 0 0 1 1.9,-1.9z" fill="#c9cacd"/><path d="M.5,5.2 a3,3 0 0 0 6,0 M3.5,8.2 v1.8 M1.8,10.2 h3.4" fill="none" stroke="#c9cacd" stroke-width=".9"/><path d="M-.6,9.6 L7.6,.2" stroke="#f0868a" stroke-width="1"/></svg>
<svg style="left:1247.0px;top:519.3px" width="10" height="8" viewBox="0 0 10 8"><rect x="0" y="1.2" width="6.6" height="5.6" rx=".8" fill="#c9cacd"/><path d="M6.9,3.6 L9.8,1.6 V6.4 L6.9,4.4Z" fill="#c9cacd"/><path d="M-.4,7.6 L9.6,.2" stroke="#f0868a" stroke-width="1"/></svg>
<svg style="left:1032.2px;top:542.5px" width="19.6" height="19.6" viewBox="-9.8 -9.8 19.6 19.6"><clipPath id="pa16"><circle r="9.8"/></clipPath><g clip-path="url(#pa16)"><rect x="-10" y="-10" width="20" height="20" fill="#0a6cff"/><text x="0" y="2.7" text-anchor="middle" font-size="7.4" fill="#fff" font-family="Liberation Sans,Noto Sans CJK SC,sans-serif">in</text></g></svg>
<div class="t" id="n16" style="left:1058.6px;top:549.4px;font-size:8.05px;color:#1d1d1f">旁听-ZhangWenxin</div>
<svg style="left:1232.8px;top:546.8px" width="7" height="11" viewBox="0 0 7 10.6"><path d="M3.5,0.3 a1.9,1.9 0 0 1 1.9,1.9 v3.4 a1.9,1.9 0 0 1 -3.8,0 v-3.4 a1.9,1.9 0 0 1 1.9,-1.9z" fill="#c9cacd"/><path d="M.5,5.2 a3,3 0 0 0 6,0 M3.5,8.2 v1.8 M1.8,10.2 h3.4" fill="none" stroke="#c9cacd" stroke-width=".9"/><path d="M-.6,9.6 L7.6,.2" stroke="#f0868a" stroke-width="1"/></svg>
<svg style="left:1247.0px;top:548.3px" width="10" height="8" viewBox="0 0 10 8"><rect x="0" y="1.2" width="6.6" height="5.6" rx=".8" fill="#c9cacd"/><path d="M6.9,3.6 L9.8,1.6 V6.4 L6.9,4.4Z" fill="#c9cacd"/><path d="M-.4,7.6 L9.6,.2" stroke="#f0868a" stroke-width="1"/></svg>
<svg style="left:1032.2px;top:571.6px" width="19.6" height="19.6" viewBox="-9.8 -9.8 19.6 19.6"><clipPath id="pa17"><circle r="9.8"/></clipPath><g clip-path="url(#pa17)"><rect x="-10" y="-10" width="20" height="20" fill="#ffffff"/><circle cx="0" cy="1" r="1.8" fill="#e8a0a8"/><circle cx="0" cy="1" r=".7" fill="#c86070"/></g></svg>
<div class="t" id="n17" style="left:1058.6px;top:578.5px;font-size:8.05px;color:#1d1d1f">旁听-Zhichao董志超</div>
<svg style="left:1232.8px;top:575.9px" width="7" height="11" viewBox="0 0 7 10.6"><path d="M3.5,0.3 a1.9,1.9 0 0 1 1.9,1.9 v3.4 a1.9,1.9 0 0 1 -3.8,0 v-3.4 a1.9,1.9 0 0 1 1.9,-1.9z" fill="#c9cacd"/><path d="M.5,5.2 a3,3 0 0 0 6,0 M3.5,8.2 v1.8 M1.8,10.2 h3.4" fill="none" stroke="#c9cacd" stroke-width=".9"/><path d="M-.6,9.6 L7.6,.2" stroke="#f0868a" stroke-width="1"/></svg>
<svg style="left:1247.0px;top:577.4px" width="10" height="8" viewBox="0 0 10 8"><rect x="0" y="1.2" width="6.6" height="5.6" rx=".8" fill="#c9cacd"/><path d="M6.9,3.6 L9.8,1.6 V6.4 L6.9,4.4Z" fill="#c9cacd"/><path d="M-.4,7.6 L9.6,.2" stroke="#f0868a" stroke-width="1"/></svg>
<svg style="left:1032.2px;top:600.7px" width="19.6" height="19.6" viewBox="-9.8 -9.8 19.6 19.6"><clipPath id="pa18"><circle r="9.8"/></clipPath><g clip-path="url(#pa18)"><rect x="-10" y="-10" width="20" height="20" fill="#0a6cff"/><text x="0" y="2.3" text-anchor="middle" font-size="6.4" fill="#fff" font-family="Liberation Sans,Noto Sans CJK SC,sans-serif">沁灵</text></g></svg>
<div class="t" id="n18" style="left:1058.6px;top:607.6px;font-size:8.05px;color:#1d1d1f">旁听-白沁灵</div>
<svg style="left:1232.8px;top:605.0px" width="7" height="11" viewBox="0 0 7 10.6"><path d="M3.5,0.3 a1.9,1.9 0 0 1 1.9,1.9 v3.4 a1.9,1.9 0 0 1 -3.8,0 v-3.4 a1.9,1.9 0 0 1 1.9,-1.9z" fill="#c9cacd"/><path d="M.5,5.2 a3,3 0 0 0 6,0 M3.5,8.2 v1.8 M1.8,10.2 h3.4" fill="none" stroke="#c9cacd" stroke-width=".9"/><path d="M-.6,9.6 L7.6,.2" stroke="#f0868a" stroke-width="1"/></svg>
<svg style="left:1247.0px;top:606.5px" width="10" height="8" viewBox="0 0 10 8"><rect x="0" y="1.2" width="6.6" height="5.6" rx=".8" fill="#c9cacd"/><path d="M6.9,3.6 L9.8,1.6 V6.4 L6.9,4.4Z" fill="#c9cacd"/><path d="M-.4,7.6 L9.6,.2" stroke="#f0868a" stroke-width="1"/></svg>
<svg style="left:1032.2px;top:629.8px" width="19.6" height="19.6" viewBox="-9.8 -9.8 19.6 19.6"><clipPath id="pa19"><circle r="9.8"/></clipPath><g clip-path="url(#pa19)"><rect x="-10" y="-10" width="20" height="20" fill="#28386c"/><circle cx="1" cy="-2" r="5" fill="#6a7ab0"/><circle cx="2" cy="-3" r="3.6" fill="#8a98c8"/><path d="M-10,6 Q0,2 10,7 V10 H-10Z" fill="#141c38"/></g></svg>
<div class="t" id="n19" style="left:1058.6px;top:636.7px;font-size:8.05px;color:#1d1d1f">旁听-曹云鹏</div>
<svg style="left:1232.8px;top:634.1px" width="7" height="11" viewBox="0 0 7 10.6"><path d="M3.5,0.3 a1.9,1.9 0 0 1 1.9,1.9 v3.4 a1.9,1.9 0 0 1 -3.8,0 v-3.4 a1.9,1.9 0 0 1 1.9,-1.9z" fill="#c9cacd"/><path d="M.5,5.2 a3,3 0 0 0 6,0 M3.5,8.2 v1.8 M1.8,10.2 h3.4" fill="none" stroke="#c9cacd" stroke-width=".9"/><path d="M-.6,9.6 L7.6,.2" stroke="#f0868a" stroke-width="1"/></svg>
<svg style="left:1247.0px;top:635.6px" width="10" height="8" viewBox="0 0 10 8"><rect x="0" y="1.2" width="6.6" height="5.6" rx=".8" fill="#c9cacd"/><path d="M6.9,3.6 L9.8,1.6 V6.4 L6.9,4.4Z" fill="#c9cacd"/><path d="M-.4,7.6 L9.6,.2" stroke="#f0868a" stroke-width="1"/></svg>
<svg style="left:1200.5px;top:112.3px" width="8" height="8" viewBox="0 0 9 9"><rect x="0" y="0" width="9" height="6.4" rx=".6" fill="#cfd0d3"/><path d="M2.4,4.6 Q3,2.6 5,2.6 V1.6 L7,3.2 L5,4.8 V3.8 Q3.4,3.7 2.4,4.6Z" fill="#fff"/><rect x="2.4" y="7.4" width="4.2" height="1.1" fill="#cfd0d3"/></svg>
<svg style="left:1215.4px;top:111.3px" width="10" height="10" viewBox="-5 -5 10 10"><circle r="4.3" fill="none" stroke="#f25050" stroke-width=".7"/><circle r="2.8" fill="#f03030"/></svg>
<!--/PANELX-->
<!--PANEL-->

<!-- ======= bottom bars ======= -->
<div id="bbar" class="abs"></div>
<!--BBARX-->
<svg style="left:15.5px;top:659.5px" width="12" height="15" viewBox="0 0 12 15"><path d="M6,0.5 a2.6,2.6 0 0 1 2.6,2.6 v4 a2.6,2.6 0 0 1 -5.2,0 v-4 a2.6,2.6 0 0 1 2.6,-2.6z" fill="#3c3e43"/><path d="M1.6,6.8 a4.4,4.4 0 0 0 8.8,0 M6,11.2 v2.2 M3.2,13.8 h5.6" fill="none" stroke="#3c3e43" stroke-width="1.1"/><path d="M1,12.4 L11.4,.8" stroke="#f0424a" stroke-width="1.2"/></svg>
<div class="t" id="b1" style="left:21.5px;top:676.8px;font-size:7.4px;color:#2a2c30;transform:translateX(-50%)">解除静音</div>
<svg style="left:41.2px;top:670.0px" width="6" height="4" viewBox="0 0 6 4" fill="none" stroke="#3a3c40" stroke-width=".9"><path d="M.5,3.5 L3,1 L5.5,3.5"/></svg>
<svg style="left:61.5px;top:661px" width="17" height="12" viewBox="0 0 17 12"><rect x="0" y="1" width="11.5" height="10" rx="1.4" fill="#3c3e43"/><path d="M12,5 L16.6,1.8 V10.2 L12,7Z" fill="#3c3e43"/><path d="M1.4,11.4 L12.6,.2" stroke="#f0424a" stroke-width="1.2"/></svg>
<div class="t" id="b2" style="left:70px;top:676.8px;font-size:7.4px;color:#2a2c30;transform:translateX(-50%)">开启视频</div>
<svg style="left:89.6px;top:670.0px" width="6" height="4" viewBox="0 0 6 4" fill="none" stroke="#3a3c40" stroke-width=".9"><path d="M.5,3.5 L3,1 L5.5,3.5"/></svg>
<svg style="left:329.5px;top:659px" width="17" height="15" viewBox="0 0 17 15"><rect x=".6" y=".6" width="15.8" height="11" rx="1" fill="#2a2d31" stroke="#1fc46a" stroke-width="1.2"/><path d="M5.2,8.4 Q6,5 9.2,5 V3.4 L12.4,6 L9.2,8.6 V7 Q6.8,6.9 5.2,8.4Z" fill="#fff"/><rect x="4.6" y="13.2" width="7.8" height="1.4" rx=".5" fill="#3c3e43"/></svg>
<div class="t" id="b3" style="left:338.1px;top:676.8px;font-size:7.4px;color:#2a2c30;transform:translateX(-50%)">共享屏幕</div>
<svg style="left:356.6px;top:669.5px" width="6" height="4" viewBox="0 0 6 4" fill="none" stroke="#3a3c40" stroke-width=".9"><path d="M.5,3.5 L3,1 L5.5,3.5"/></svg>
<svg style="left:379px;top:659px" width="12" height="14" viewBox="0 0 12 14"><path d="M6,.3 L11.6,2.4 V7.6 Q11.4,11.4 6,13.7 Q.6,11.4 .4,7.6 V2.4Z" fill="#3c3e43"/><path d="M3.4,6 L6,3.8 L8.6,6 M3.4,8.8 L6,6.6 L8.6,8.8" fill="none" stroke="#fff" stroke-width="1.1"/></svg>
<div class="t" id="b4" style="left:385.2px;top:676.8px;font-size:7.4px;color:#2a2c30;transform:translateX(-50%)">安全</div>
<svg style="left:417px;top:659.5px" width="15" height="14" viewBox="0 0 15 14"><circle cx="6" cy="3.4" r="3.1" fill="#3c3e43"/><path d="M.2,13.4 Q.4,7.6 6,7.6 Q8.6,7.6 10,9 Q8,10.6 8.6,13.4Z" fill="#3c3e43"/><circle cx="11.6" cy="10.6" r="3" fill="#3c3e43"/><path d="M11.6,9v3.2M10,10.6h3.2" stroke="#fff" stroke-width=".8"/></svg>
<div class="t" id="b5" style="left:424.1px;top:676.8px;font-size:7.4px;color:#2a2c30;transform:translateX(-50%)">邀请</div>
<div class="abs" style="left:445px;top:657px;width:49.8px;height:29px;background:#e8e9ec;border-radius:3px"></div>
<svg style="left:463px;top:659.5px" width="15" height="14" viewBox="0 0 15 14"><circle cx="9.6" cy="3" r="2.4" fill="#3c3e43" opacity=".7"/><circle cx="6.6" cy="4" r="3" fill="#3c3e43" stroke="#e8e9ec" stroke-width=".6"/><path d="M.4,13.4 Q.6,8 6.6,8 Q12.6,8 12.8,13.4Z" fill="#3c3e43"/><path d="M10.4,6.8 Q14.4,7.4 14.6,12 H13.4 Q13,8.6 10.4,6.8Z" fill="#3c3e43" opacity=".7"/></svg>
<div class="t" id="b6" style="left:469.5px;top:676.8px;font-size:7.4px;color:#2a2c30;transform:translateX(-50%)">管理成员(78)</div>
<svg style="left:508.5px;top:660.5px" width="14" height="13" viewBox="0 0 14 13"><path d="M1.2,.4 H12.8 Q13.6,.4 13.6,1.2 V8.6 Q13.6,9.4 12.8,9.4 H10.6 V12.6 L7.4,9.4 H1.2 Q.4,9.4 .4,8.6 V1.2 Q.4,.4 1.2,.4Z" fill="#3c3e43"/><circle cx="3.8" cy="4.9" r=".9" fill="#fff"/><circle cx="7" cy="4.9" r=".9" fill="#fff"/><circle cx="10.2" cy="4.9" r=".9" fill="#fff"/></svg>
<div class="t" id="b7" style="left:515.3px;top:676.8px;font-size:7.4px;color:#2a2c30;transform:translateX(-50%)">聊天</div>
<svg style="left:547.4px;top:659px" width="14" height="14" viewBox="-7 -7 14 14"><circle r="6.3" fill="none" stroke="#3c3e43" stroke-width="1"/><circle r="4.6" fill="#3c3e43"/></svg>
<div class="t" id="b8" style="left:554.5px;top:676.8px;font-size:7.4px;color:#2a2c30;transform:translateX(-50%)">录制</div>
<svg style="left:574.2px;top:669.5px" width="6" height="4" viewBox="0 0 6 4" fill="none" stroke="#3a3c40" stroke-width=".9"><path d="M.5,3.5 L3,1 L5.5,3.5"/></svg>
<svg style="left:594.5px;top:660px" width="15" height="13" viewBox="0 0 15 13"><rect x="4" y="0" width="7" height="5.6" rx=".8" fill="#3c3e43"/><rect x="0" y="7" width="6.8" height="5.6" rx=".8" fill="#3c3e43"/><rect x="8.2" y="7" width="6.8" height="5.6" rx=".8" fill="#3c3e43"/></svg>
<div class="t" id="b9" style="left:602.2px;top:676.8px;font-size:7.4px;color:#2a2c30;transform:translateX(-50%)">分组讨论</div>
<svg style="left:634.5px;top:659px" width="15" height="14" viewBox="0 0 15 14"><rect x="0" y="1" width="5.8" height="5.8" rx=".8" fill="#3c3e43"/><rect x="0" y="8" width="5.8" height="5.8" rx=".8" fill="#3c3e43"/><rect x="7" y="8" width="5.8" height="5.8" rx=".8" fill="#3c3e43"/><path d="M10.4,.4 L14,4 L10.4,7.6 L6.8,4Z" fill="none" stroke="#3c3e43" stroke-width="1"/></svg>
<div class="t" id="b10" style="left:641.7px;top:676.8px;font-size:7.4px;color:#2a2c30;transform:translateX(-50%)">应用</div>
<svg style="left:674px;top:659px" width="14" height="14" viewBox="-7 -7 14 14"><g fill="#3c3e43"><circle r="4.8"/><g id="gt"><rect x="-1.5" y="-6.8" width="3" height="3" rx=".5"/><rect x="-1.5" y="3.8" width="3" height="3" rx=".5"/></g><use href="#gt" transform="rotate(60)"/><use href="#gt" transform="rotate(120)"/></g><circle r="2.2" fill="#fff"/></svg>
<div class="t" id="b11" style="left:681.2px;top:676.8px;font-size:7.4px;color:#2a2c30;transform:translateX(-50%)">设置</div>
<div class="abs" style="left:963px;top:660px;width:49.5px;height:23.5px;border:1px solid #f3a6a8;border-radius:3px;background:#fff"></div>
<div class="t" id="b12" style="left:987.8px;top:668px;font-size:8.05px;color:#ec4a50;transform:translateX(-50%)">结束会议</div>
<div class="abs" style="left:1020.3px;top:656px;width:1px;height:31px;background:#e2e3e6"></div>
<div class="abs" style="left:1057px;top:663.3px;width:47.0px;height:16.2px;border:1px solid #d9dbe0;border-radius:2px;background:#fff"></div>
<div class="t" id="pb1" style="left:1080.5px;top:667.6px;font-size:8.05px;color:#1668e3;transform:translateX(-50%)">全体静音</div>
<div class="abs" style="left:1115.3px;top:663.3px;width:56.9px;height:16.2px;border:1px solid #d9dbe0;border-radius:2px;background:#fff"></div>
<div class="t" id="pb2" style="left:1143.75px;top:667.6px;font-size:8.05px;color:#1668e3;transform:translateX(-50%)">解除全体静音</div>
<div class="abs" style="left:1184px;top:663.3px;width:47.0px;height:16.2px;border:1px solid #d9dbe0;border-radius:2px;background:#fff"></div>
<div class="t" id="pb3" style="left:1207.5px;top:667.6px;font-size:8.05px;color:#1668e3;transform:translateX(-50%)">更多 <span style="font-size:5px;vertical-align:1px">▼</span></div>
<!--/BBARX-->
<!--BBAR-->
<div id="task" class="abs"></div>
<!--TASKX-->
<svg style="left:10.6px;top:695.4px" width="10.8" height="11.4" viewBox="0 0 10.8 11.4" fill="#fff"><path d="M0,1.6 L4.4,1 V5.3 H0Z M5.2,.9 L10.8,0 V5.3 H5.2Z M0,6.1 H4.4 V10.4 L0,9.8Z M5.2,6.1 H10.8 V11.4 L5.2,10.5Z"/></svg>
<div class="abs" style="left:32px;top:687.6px;width:226.7px;height:26.4px;background:#f2f2f2"></div>
<svg style="left:40px;top:696px" width="10" height="10" viewBox="0 0 10 10" fill="none" stroke="#222" stroke-width="1"><circle cx="6" cy="4" r="3.2"/><path d="M3.7,6.3 L.6,9.4"/></svg>
<div class="t" id="ts" style="left:58.5px;top:697px;font-size:9.17px;color:#3a3a3a">在这里输入你要搜索的内容</div>
<svg style="left:269.6px;top:696px" width="10" height="10" viewBox="-5 -5 10 10"><circle r="4.1" fill="none" stroke="#fff" stroke-width="1.3"/></svg>
<svg style="left:300px;top:696.5px" width="12" height="9" viewBox="0 0 12 9" fill="none" stroke="#fff" stroke-width="1"><rect x="2.5" y="1.5" width="6" height="6"/><path d="M.5,.5v8 M10.5,.5v2 M10.5,6.5v2 M9,2.5h3M9,6.5h3"/></svg>
<div class="abs" style="left:324px;top:687.6px;width:62.2px;height:26.4px;background:#3d4755"></div><div class="abs" style="left:324px;top:712px;width:62.2px;height:2px;background:#8cc8f2"></div>
<svg style="left:331.5px;top:694.6px" width="9" height="13" viewBox="0 0 9 13"><path d="M0,0 H6.5 L9,1.6 V13 H0Z" fill="#f3d982"/><path d="M6,0 V11.4 H9 V1.6Z" fill="#e0b850"/></svg>
<div class="t" id="tf" style="left:347.9px;top:697.3px;font-size:8.3px;color:#fff">2019.0...</div>
<div class="abs" style="left:386.2px;top:687.6px;width:183.8px;height:26.4px;background:#a55d25"></div><div class="abs" style="left:386.2px;top:712px;width:183.8px;height:2px;background:#f28418"></div>
<svg style="left:392px;top:693.9px" width="14" height="13.4" viewBox="0 0 14 13.4"><rect width="14" height="13.4" fill="#fbd20e"/><path d="M14,7 V13.4 H7.6Z" fill="#3c3a36"/></svg>
<div class="t" id="tn0" style="left:410.2px;top:697.3px;font-size:7.4px;color:#fff">便笺</div>
<svg style="left:453.4px;top:693.9px" width="14" height="13.4" viewBox="0 0 14 13.4"><rect width="14" height="13.4" fill="#fbd20e"/><path d="M14,7 V13.4 H7.6Z" fill="#3c3a36"/></svg>
<div class="t" id="tn1" style="left:471.59999999999997px;top:697.3px;font-size:7.4px;color:#fff">便笺</div>
<svg style="left:514.5px;top:693.9px" width="14" height="13.4" viewBox="0 0 14 13.4"><rect width="14" height="13.4" fill="#fbd20e"/><path d="M14,7 V13.4 H7.6Z" fill="#3c3a36"/></svg>
<div class="t" id="tn2" style="left:532.7px;top:697.3px;font-size:7.4px;color:#fff">便笺</div>
<svg style="left:578px;top:694px" width="13.5" height="13" viewBox="0 0 13.5 13"><path d="M.3,6.2 Q1,0.3 7.2,0.3 Q13.2,0.6 13.2,7 V8.2 H4.6 Q5,10.6 8,10.7 Q10.4,10.7 12.4,9.6 V12 Q10.4,13 7.6,12.9 Q1.6,12.6 1.5,7.2 Q1.6,4.6 3.6,3.2 Q1.4,3.8 .3,6.2Z M4.6,5.8 H9.6 Q9.4,3.4 7.2,3.4 Q5,3.5 4.6,5.8Z" fill="#1b7fe0" fill-rule="evenodd"/></svg>
<svg style="left:604.3px;top:693.4px" width="14.6" height="14.6" viewBox="-7.3 -7.3 14.6 14.6"><circle r="7.3" fill="#e33b2e"/><path d="M0,0 L-6.32,-3.65 A7.3,7.3 0 0 0 -0.0,7.3 L3.2,1.8Z" fill="#2ba14b"/><path d="M0,0 L3.2,1.9 L0,7.3 A7.3,7.3 0 0 0 6.32,-3.65 L0,-3.65Z" fill="#fbc116"/><circle r="3.3" fill="#fff"/><circle r="2.6" fill="#3f7fe6"/></svg>
<div class="t" id="tc" style="left:622.3px;top:697.3px;font-size:7.6px;color:#fff">现任领...</div>
<div class="abs" style="left:601.5px;top:712px;width:56.5px;height:2px;background:#8cc8f2"></div>
<svg style="left:667px;top:694px" width="16" height="13" viewBox="0 0 16 13"><path d="M0,4.6 L8,0 L16,4.6 V13 H0Z" fill="#1b84dc"/><path d="M0,4.6 L8,9.6 L16,4.6 V13 H0Z" fill="#3fa4f0"/><path d="M1.4,4.2 L8,.6 L14.6,4.2 L8,8.6Z" fill="#e8f4ff"/></svg>
<svg style="left:695px;top:694px" width="15" height="13" viewBox="0 0 15 13"><rect x="5" y="1" width="10" height="11" rx="1" fill="#c8a0dc"/><path d="M9,3.4h4.6M9,6.4h4.6M9,9.4h4.6" stroke="#7a2a9c" stroke-width="1.2"/><path d="M0,1.2 L8.6,0 V13 L0,11.8Z" fill="#7a2b9e"/><path d="M2.4,9.2 V3.8 L6,9.2 V3.8" fill="none" stroke="#fff" stroke-width="1.1"/></svg>
<div class="abs" style="left:722.7px;top:693px;width:15px;height:15px;background:#e8151d;border-radius:2.5px"></div>
<div class="t" id="" style="left:724.2px;top:697.6px;font-size:6px;color:#fff">有道</div>
<svg style="left:750px;top:693.5px" width="15.6" height="14.5" viewBox="0 0 15.6 14.5"><rect width="15.6" height="14.5" rx="1.5" fill="#4b4b4b"/><path d="M3.6,4.4 L12,1.8 V4.6 L6.8,6.2 L12,7.8 V10.4 L3.6,13 V10.2 L8.8,8.6 L3.6,7Z" fill="#ff9a1e"/></svg>
<svg style="left:777px;top:694px" width="17" height="14" viewBox="0 0 17 14"><ellipse cx="6.2" cy="5" rx="6" ry="4.8" fill="#2bc933"/><path d="M2.6,8.6 L2,11 L5,9.6Z" fill="#2bc933"/><ellipse cx="11.4" cy="9" rx="5" ry="4" fill="#f2f2f2"/><path d="M14,12 L14.8,13.8 L12,12.8Z" fill="#f2f2f2"/></svg>
<div class="t" id="tw1" style="left:796px;top:697.3px;font-size:7.5px;color:#fff">微信</div>
<div class="abs" style="left:775px;top:712px;width:56px;height:2px;background:#8cc8f2"></div>
<svg style="left:838px;top:694px" width="17" height="14" viewBox="0 0 17 14"><ellipse cx="6.2" cy="5" rx="6" ry="4.8" fill="#2bc933"/><path d="M2.6,8.6 L2,11 L5,9.6Z" fill="#2bc933"/><ellipse cx="11.4" cy="9" rx="5" ry="4" fill="#f2f2f2"/><path d="M14,12 L14.8,13.8 L12,12.8Z" fill="#f2f2f2"/></svg>
<div class="t" id="tw2" style="left:857.8px;top:697.3px;font-size:7.6px;color:#fff">图片查看</div>
<div class="abs" style="left:837px;top:712px;width:54.6px;height:2px;background:#8cc8f2"></div>
<svg style="left:900.8px;top:693.5px" width="15" height="14.5" viewBox="0 0 15 14.5"><rect width="15" height="14.5" rx="2.6" fill="#1d6bf5"/><path d="M2.4,9.8 L5.6,5 L7.8,8.4 L9.6,5.6 L12.8,9.8 H10 L9.6,9 L8.6,10.4 H6.8 L5.6,8.4 L4.8,9.8Z" fill="#fff"/></svg>
<div class="t" id="tm1" style="left:918.9px;top:697.3px;font-size:7.8px;color:#fff">腾讯会议</div>
<div class="abs" style="left:898.4px;top:712px;width:56px;height:2px;background:#8cc8f2"></div>
<svg style="left:962px;top:693.5px" width="15" height="14.5" viewBox="0 0 15 14.5"><rect width="15" height="14.5" rx="2.6" fill="#1d6bf5"/><path d="M2.4,9.8 L5.6,5 L7.8,8.4 L9.6,5.6 L12.8,9.8 H10 L9.6,9 L8.6,10.4 H6.8 L5.6,8.4 L4.8,9.8Z" fill="#fff"/></svg>
<div class="t" id="tm2" style="left:980px;top:697.3px;font-size:7.8px;color:#fff">腾讯会议</div>
<div class="abs" style="left:960px;top:712px;width:54.6px;height:2px;background:#8cc8f2"></div>
<svg style="left:1023.5px;top:698px" width="8" height="5" viewBox="0 0 8 5" fill="none" stroke="#fff" stroke-width="1"><path d="M.6,4.4 L4,1 L7.4,4.4"/></svg>
<svg style="left:1039.5px;top:695px" width="7" height="11" viewBox="0 0 7 10.6"><path d="M3.5,0.3 a1.9,1.9 0 0 1 1.9,1.9 v3.4 a1.9,1.9 0 0 1 -3.8,0 v-3.4 a1.9,1.9 0 0 1 1.9,-1.9z" fill="#fff"/><path d="M.5,5.2 a3,3 0 0 0 6,0 M3.5,8.2 v1.8 M1.8,10.2 h3.4" fill="none" stroke="#fff" stroke-width=".9"/></svg>
<svg style="left:1055px;top:695px" width="10" height="11" viewBox="0 0 10 11"><path d="M5,.3 L9.6,1.8 V5.4 Q9.4,9 5,10.8 Q.6,9 .4,5.4 V1.8Z" fill="#2c7be8"/><path d="M2.4,4 Q5,2.4 7.6,4" stroke="#fff" stroke-width=".9" fill="none"/><circle cx="7.4" cy="8.4" r="2.2" fill="#2bc933"/></svg>
<svg style="left:1069.5px;top:696px" width="11" height="9" viewBox="0 0 17 14"><ellipse cx="6.2" cy="5" rx="6" ry="4.8" fill="#2bc933"/><ellipse cx="11.4" cy="9" rx="5" ry="4" fill="#d8d8d8"/></svg>
<svg style="left:1086px;top:695.5px" width="11" height="10" viewBox="0 0 11 10" fill="none" stroke="#b4b6ba" stroke-width="1"><path d="M1.2,9.4 A8.6,8.6 0 0 1 9.8,.8 M3.8,9.4 A6,6 0 0 1 9.8,3.4 M6.4,9.4 A3.4,3.4 0 0 1 9.8,6"/><circle cx="9.4" cy="9" r=".9" fill="#b4b6ba" stroke="none"/></svg>
<svg style="left:1102px;top:696px" width="10" height="10" viewBox="-5 -5 10 10"><circle r="4.6" fill="#8a8c90"/><ellipse rx="3" ry="1.8" fill="#d8d8d8"/><circle r="1" fill="#5a5c60"/></svg>
<svg style="left:1116px;top:696px" width="12" height="10" viewBox="0 0 12 10"><path d="M.4,3.4 H2.6 L5.4,.8 V9.2 L2.6,6.6 H.4Z" fill="none" stroke="#fff" stroke-width=".9"/><path d="M7,3.2 Q8.2,5 7,6.8 M8.8,1.8 Q10.8,5 8.8,8.2" fill="none" stroke="#fff" stroke-width=".8"/></svg>
<svg style="left:1133px;top:694.5px" width="11" height="12" viewBox="0 0 11 12"><ellipse cx="5.5" cy="6.6" rx="4" ry="5" fill="#111"/><ellipse cx="5.5" cy="8" rx="2.6" ry="3.2" fill="#fff"/><ellipse cx="5.5" cy="3.4" rx="2.8" ry="2.6" fill="#111"/><path d="M2.6,5.4 Q5.5,7 8.4,5.4 L8,6.8 Q5.5,8 3,6.8Z" fill="#e8242a"/><ellipse cx="5.5" cy="4.6" rx="1.6" ry=".7" fill="#f8a81a"/><ellipse cx="3" cy="11.2" rx="2" ry=".8" fill="#f8a81a"/><ellipse cx="8" cy="11.2" rx="2" ry=".8" fill="#f8a81a"/><path d="M3,1.6 L1.4,.2 M2.6,.8 h2" stroke="#d8283a" stroke-width=".8"/></svg>
<div class="t" id="" style="left:1149.2px;top:696.2px;font-size:9.4px;color:#fff">中</div>
<svg style="left:1166.5px;top:694.5px" width="13" height="12" viewBox="0 0 13 12"><ellipse cx="6.5" cy="6" rx="6.3" ry="5.6" fill="#f4511e" transform="rotate(-18 6.5 6)"/><path d="M9.4,3 Q5.6,1.8 4.4,4 Q4,6 7,6.4 Q8.6,6.8 8,7.8 Q6.4,9 3.4,8" fill="none" stroke="#fff" stroke-width="1.6"/></svg>
<div class="t" id="tt1" style="left:1199px;top:690.3px;font-size:8.3px;color:#fff">16:36</div>
<div class="t" id="tt2" style="left:1187px;top:702.8px;font-size:8.3px;color:#fff">2022/10/24</div>
<svg style="left:1240.5px;top:693.5px" width="17" height="16" viewBox="0 0 17 16"><path d="M.4,.4 H11 V8.8 H8.6 V11 L6,8.8 H.4Z" fill="#f4f4f4"/><path d="M2.2,2.6h7M2.2,4.6h7M2.2,6.6h4.6" stroke="#1b2838" stroke-width=".7"/><circle cx="11.4" cy="10.8" r="4.3" fill="#161f2c" stroke="#d8d8d8" stroke-width=".8"/><text x="11.4" y="13.2" font-size="6.6" fill="#fff" text-anchor="middle" font-family="Liberation Sans,sans-serif">4</text></svg>
<!--/TASKX-->
<!--TASK-->
</body>
</html>
